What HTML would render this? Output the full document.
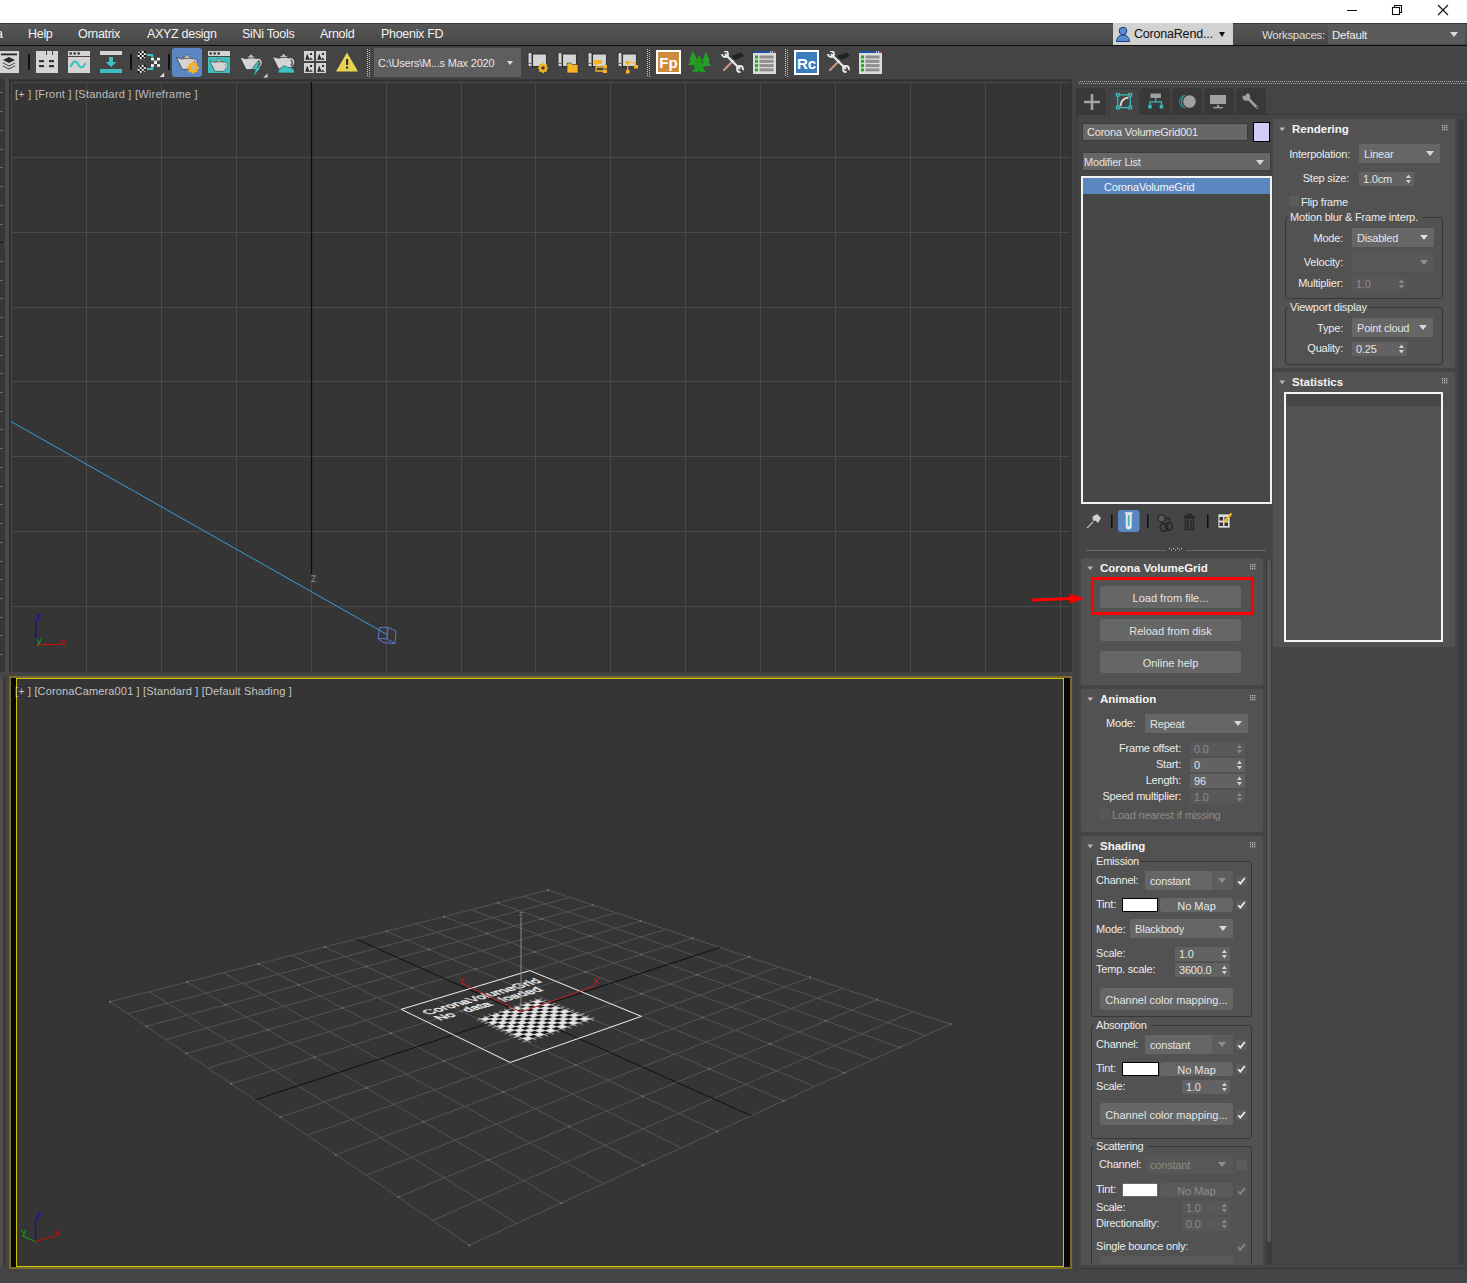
<!DOCTYPE html>
<html><head><meta charset="utf-8"><style>*{margin:0;padding:0;box-sizing:border-box}
html,body{width:1467px;height:1283px;overflow:hidden;background:#444;font-family:"Liberation Sans",sans-serif;font-size:12px;color:#e0e0e0}
.a{position:absolute}
.t{position:absolute;white-space:nowrap;font-size:12px;line-height:14px;color:#ececec;letter-spacing:-0.2px}
.tb{position:absolute;white-space:nowrap;font-size:12px;line-height:14px;color:#f4f4f4;font-weight:bold}
.dim{color:#8e8e8e}
.r{text-align:right}
.dd{position:absolute;background:#656565}
.dd.dis{background:#585858}
.sp{position:absolute;background:#626262}
.sp.dis{background:#585858}
.btn{position:absolute;background:#636363;border-radius:3px;text-align:center;color:#e6e6e6;font-size:12px;line-height:22px;white-space:nowrap;letter-spacing:0}
.ro{position:absolute;background:#515151;border-radius:3px}
.gb{position:absolute;border:1px solid #363636;border-radius:3px}
.gbl{position:absolute;background:#515151;padding:0 3px 0 2px;line-height:12px;font-size:12px;color:#ebebeb;white-space:nowrap}
.cb{position:absolute;background:#5e5e5e;width:11px;height:10px}
.arr{position:absolute;width:0;height:0;border-left:4px solid transparent;border-right:4px solid transparent;border-top:5px solid #d8d8d8}
</style></head><body><div class="a" style="left:0;top:0;width:1467px;height:23px;background:#fff"></div><svg class="a" style="left:1330px;top:0" width="137" height="23"><line x1="17" y1="10.5" x2="27" y2="10.5" stroke="#111" stroke-width="1"/><rect x="62.5" y="7.5" width="7" height="7" fill="none" stroke="#111" stroke-width="1.1"/><path d="M64.5 7.5V5.5H71.5V12.5H69.5" fill="none" stroke="#111" stroke-width="1.1"/><path d="M108 5L118 15M118 5L108 15" stroke="#111" stroke-width="1.1"/></svg><div class="a" style="left:0;top:23px;width:1467px;height:23px;background:linear-gradient(#575757,#464646);border-top:1px solid #3a3a3a;border-bottom:1px solid #0e0e0e"></div><span class="t" style="left:-4px;top:27px;font-size:12.5px;letter-spacing:-0.3px;color:#f2f2f2">a</span><span class="t" style="left:28px;top:27px;font-size:12.5px;letter-spacing:-0.3px;color:#f2f2f2">Help</span><span class="t" style="left:78px;top:27px;font-size:12.5px;letter-spacing:-0.3px;color:#f2f2f2">Ornatrix</span><span class="t" style="left:147px;top:27px;font-size:12.5px;letter-spacing:-0.3px;color:#f2f2f2">AXYZ design</span><span class="t" style="left:242px;top:27px;font-size:12.5px;letter-spacing:-0.3px;color:#f2f2f2">SiNi Tools</span><span class="t" style="left:320px;top:27px;font-size:12.5px;letter-spacing:-0.3px;color:#f2f2f2">Arnold</span><span class="t" style="left:381px;top:27px;font-size:12.5px;letter-spacing:-0.3px;color:#f2f2f2">Phoenix FD</span><div class="a" style="left:1113px;top:23px;width:120px;height:22px;background:#d2d2d2"></div><svg class="a" style="left:1115px;top:25px" width="20" height="18"><circle cx="8" cy="6" r="3.8" fill="#5a8ad6" stroke="#1d3a7a" stroke-width="1"/><path d="M1.5 16.5C2 11.5 5 10 8 10S14 11.5 14.5 16.5Z" fill="#5a8ad6" stroke="#1d3a7a" stroke-width="1"/></svg><span class="t" style="left:1134px;top:27px;font-size:12.5px;color:#111">CoronaRend...</span><div class="arr" style="left:1219px;top:32px;border-top-color:#111;border-left-width:3.5px;border-right-width:3.5px"></div><span class="t" style="left:1262px;top:28px;font-size:11.5px;color:#ddd;letter-spacing:-0.3px">Workspaces:</span><div class="a" style="left:1328px;top:24px;width:137px;height:20px;background:#5a5a5a"></div><span class="t" style="left:1332px;top:28px;font-size:11.5px;color:#eee">Default</span><div class="arr" style="left:1450px;top:32px;border-top-color:#ddd;border-left-width:4px;border-right-width:4px"></div><div class="a" style="left:0;top:46px;width:1467px;height:33px;background:#444"></div><svg class="a" style="left:0px;top:51px" width="19" height="22" viewBox="0 0 19 22"><rect width="19" height="22" fill="#d4d4d4"/><rect x="1" y="2.5" width="16" height="1.8" fill="#222"/><path d="M9 6L15 9L9 12L3 9Z M3 11.5L9 14.5L15 11.5L15.5 12L9 15.5L2.5 12Z M3 14.5L9 17.5L15 14.5L15.5 15L9 18.5L2.5 15Z" fill="#2a2a2a"/></svg><div class="a" style="left:28px;top:54px;width:1.5px;height:16px;background:#111"></div><div class="a" style="left:168px;top:54px;width:1.5px;height:16px;background:#111"></div><div class="a" style="left:130px;top:54px;width:1.5px;height:16px;background:#111"></div><svg class="a" style="left:36px;top:51px" width="23" height="23" viewBox="0 0 23 23"><path d="M0 0h10v4h12v18H0Z" fill="#d4d4d4"/><rect x="11" y="0" width="5" height="4" fill="#d4d4d4"/><rect x="17" y="0" width="5" height="4" fill="#d4d4d4"/><g fill="#333"><rect x="3" y="9" width="5" height="2.2"/><rect x="13" y="9" width="5" height="2.2"/><rect x="3" y="14" width="5" height="2.2"/><rect x="13" y="14" width="5" height="2.2"/></g></svg><svg class="a" style="left:68px;top:51px" width="23" height="23" viewBox="0 0 23 23"><rect x="0" y="0" width="22" height="5" fill="#d4d4d4"/><rect x="0" y="6" width="22" height="16" fill="#d4d4d4"/><g fill="#333"><rect x="1.5" y="1.3" width="2.3" height="2.3"/><rect x="5.5" y="1.3" width="2.3" height="2.3"/><rect x="9.5" y="1.3" width="2.3" height="2.3"/></g><path d="M3 15C5 10 8 9 10 13S14 18 17 13" fill="none" stroke="#3fbfbf" stroke-width="2.2" stroke-linecap="round"/></svg><svg class="a" style="left:100px;top:51px" width="23" height="23" viewBox="0 0 23 23"><rect x="0" y="0" width="22" height="4" fill="#d4d4d4"/><rect x="0" y="18" width="22" height="4" fill="#3fbfbf"/><path d="M9 6h4v5h3.5L11 16L5.5 11H9Z" fill="#3fbfbf"/></svg><svg class="a" style="left:137px;top:50px" width="28" height="28" viewBox="0 0 28 28"><circle cx="4.7" cy="5" r="4.2" fill="#f0f0f0"/><rect x="0.7" y="3.0" width="2" height="2" fill="#111"/><rect x="0.7" y="7.0" width="2" height="2" fill="#111"/><rect x="2.7" y="1.0" width="2" height="2" fill="#111"/><rect x="2.7" y="5.0" width="2" height="2" fill="#111"/><rect x="4.7" y="3.0" width="2" height="2" fill="#111"/><rect x="4.7" y="7.0" width="2" height="2" fill="#111"/><rect x="6.7" y="1.0" width="2" height="2" fill="#111"/><rect x="6.7" y="5.0" width="2" height="2" fill="#111"/><circle cx="4.7" cy="18.9" r="4.2" fill="#f0f0f0"/><rect x="0.7" y="16.9" width="2" height="2" fill="#111"/><rect x="0.7" y="20.9" width="2" height="2" fill="#111"/><rect x="2.7" y="14.9" width="2" height="2" fill="#111"/><rect x="2.7" y="18.9" width="2" height="2" fill="#111"/><rect x="4.7" y="16.9" width="2" height="2" fill="#111"/><rect x="4.7" y="20.9" width="2" height="2" fill="#111"/><rect x="6.7" y="14.9" width="2" height="2" fill="#111"/><rect x="6.7" y="18.9" width="2" height="2" fill="#111"/><path d="M10 5h5.2v2.4M10 19h5.2v-2.4" fill="none" stroke="#3fbfbf" stroke-width="2"/><g fill="#f0f0f0"><rect x="14" y="7.8" width="3" height="2.6"/><rect x="20" y="7.8" width="3" height="2.6"/><rect x="17" y="10.6" width="3" height="3.4"/><rect x="14" y="14.2" width="3" height="2.6"/><rect x="20" y="14.2" width="3" height="2.6"/></g><path d="M22.8 27h4.4v-4.4Z" fill="#e0e0e0"/></svg><div class="a" style="left:172px;top:48px;width:30px;height:29px;background:#5b87c3;border-radius:3px"></div><svg class="a" style="left:172px;top:48px" width="30" height="29" viewBox="0 0 30 29"><g transform="translate(4,6.5) scale(0.95)"><path d="M0.5 3.2L6.8 4.8C9 3.6 14.5 3.4 17.2 4.6C20 3.6 23 5.8 22.6 9.2C22.2 12 19.8 13.8 18.2 14.6L17.6 15.6H6.6Z" fill="#d4d4d4" stroke="#2e2e2e" stroke-width="0.7"/><path d="M10.2 0.4h2.8v1.8h2.2v1.6H8v-1.6h2.2Z" fill="#d4d4d4" stroke="#2e2e2e" stroke-width="0.5"/><path d="M18.6 6.6C20.6 7 21 10.6 18.8 12.3" fill="none" stroke="#5b87c3" stroke-width="1.3"/></g><polygon points="26.60,19.70 24.73,21.24 24.96,23.66 22.54,23.43 21.00,25.30 19.46,23.43 17.04,23.66 17.27,21.24 15.40,19.70 17.27,18.16 17.04,15.74 19.46,15.97 21.00,14.10 22.54,15.97 24.96,15.74 24.73,18.16" fill="#f5b324" stroke="#f5b324" stroke-width="1.2" stroke-linejoin="round"/><circle cx="21" cy="19.7" r="2.13" fill="#b8b8b8"/></svg><svg class="a" style="left:208px;top:51px" width="23" height="23" viewBox="0 0 23 23"><rect x="0" y="0" width="22" height="5" fill="#d4d4d4"/><rect x="0" y="6" width="22" height="16" fill="#3fbfbf"/><g fill="#333"><rect x="1.5" y="1.3" width="2.3" height="2.3"/><rect x="5.5" y="1.3" width="2.3" height="2.3"/><rect x="9.5" y="1.3" width="2.3" height="2.3"/></g><g transform="translate(1.5,7.5) scale(0.82)"><path d="M0.5 3.2L6.8 4.8C9 3.6 14.5 3.4 17.2 4.6C20 3.6 23 5.8 22.6 9.2C22.2 12 19.8 13.8 18.2 14.6L17.6 15.6H6.6Z" fill="#d4d4d4" stroke="#2e2e2e" stroke-width="0.7"/><path d="M10.2 0.4h2.8v1.8h2.2v1.6H8v-1.6h2.2Z" fill="#d4d4d4" stroke="#2e2e2e" stroke-width="0.5"/><path d="M18.6 6.6C20.6 7 21 10.6 18.8 12.3" fill="none" stroke="#3fbfbf" stroke-width="1.3"/></g></svg><svg class="a" style="left:239px;top:50px" width="29" height="28" viewBox="0 0 29 28"><g transform="translate(0.5,4) scale(1.0)"><path d="M0.5 3.2L6.8 4.8C9 3.6 14.5 3.4 17.2 4.6C20 3.6 23 5.8 22.6 9.2C22.2 12 19.8 13.8 18.2 14.6L17.6 15.6H6.6Z" fill="#d4d4d4" stroke="#2e2e2e" stroke-width="0.7"/><path d="M10.2 0.4h2.8v1.8h2.2v1.6H8v-1.6h2.2Z" fill="#d4d4d4" stroke="#2e2e2e" stroke-width="0.5"/><path d="M18.6 6.6C20.6 7 21 10.6 18.8 12.3" fill="none" stroke="#444" stroke-width="1.3"/></g><path d="M18.5 11.5L12.5 19.5h4l-2.5 7.5 8-9.5h-4l3-6Z" fill="#3fbfbf" stroke="#333" stroke-width="0.5"/><path d="M24.5 27.5h4v-4Z" fill="#e0e0e0"/></svg><svg class="a" style="left:271px;top:50px" width="25" height="26" viewBox="0 0 25 26"><g transform="translate(1,3.5) scale(1.0)"><path d="M0.5 3.2L6.8 4.8C9 3.6 14.5 3.4 17.2 4.6C20 3.6 23 5.8 22.6 9.2C22.2 12 19.8 13.8 18.2 14.6L17.6 15.6H6.6Z" fill="#d4d4d4" stroke="#2e2e2e" stroke-width="0.7"/><path d="M10.2 0.4h2.8v1.8h2.2v1.6H8v-1.6h2.2Z" fill="#d4d4d4" stroke="#2e2e2e" stroke-width="0.5"/><path d="M18.6 6.6C20.6 7 21 10.6 18.8 12.3" fill="none" stroke="#444" stroke-width="1.3"/></g><path d="M9 23C6.5 23 6.5 19 9.5 19C10.5 15.5 15 15 17 17.8C20.5 16.5 24 19 23.5 23Z" fill="#3fbfbf" stroke="#333" stroke-width="0.5"/></svg><svg class="a" style="left:304px;top:51px" width="23" height="23" viewBox="0 0 23 23"><rect x="0" y="0" width="10" height="10" fill="#d4d4d4"/><path d="M1.2 8.8L3.2 2.6L5.4 8.2L6.8 6.6L8.8 8.8Z" fill="#2c2c2c"/><rect x="6" y="2" width="2" height="2" fill="#2c2c2c"/><rect x="12" y="0" width="10" height="10" fill="#d4d4d4"/><path d="M13.2 8.8L15.2 2.6L17.4 8.2L18.8 6.6L20.8 8.8Z" fill="#2c2c2c"/><rect x="18" y="2" width="2" height="2" fill="#2c2c2c"/><rect x="0" y="12" width="10" height="10" fill="#d4d4d4"/><path d="M1.2 20.8L3.2 14.6L5.4 20.2L6.8 18.6L8.8 20.8Z" fill="#2c2c2c"/><rect x="6" y="14" width="2" height="2" fill="#2c2c2c"/><rect x="12" y="12" width="10" height="10" fill="#d4d4d4"/><path d="M13.2 20.8L15.2 14.6L17.4 20.2L18.8 18.6L20.8 20.8Z" fill="#2c2c2c"/><rect x="18" y="14" width="2" height="2" fill="#2c2c2c"/></svg><svg class="a" style="left:335px;top:51px" width="24" height="22" viewBox="0 0 24 22"><path d="M12 1.5L23 20.5H1Z" fill="#e9d34e"/><rect x="11" y="8" width="2.2" height="6" fill="#333"/><rect x="11" y="15.5" width="2.2" height="2.2" fill="#333"/></svg><svg class="a" style="left:367px;top:49px" width="4" height="28" viewBox="0 0 4 28"><g shape-rendering="crispEdges"><rect x="0" y="0" width="1" height="1" fill="#d0d0d0"/><rect x="0" y="2" width="1" height="1" fill="#d0d0d0"/><rect x="0" y="4" width="1" height="1" fill="#d0d0d0"/><rect x="0" y="6" width="1" height="1" fill="#d0d0d0"/><rect x="0" y="8" width="1" height="1" fill="#d0d0d0"/><rect x="0" y="10" width="1" height="1" fill="#d0d0d0"/><rect x="0" y="12" width="1" height="1" fill="#d0d0d0"/><rect x="0" y="14" width="1" height="1" fill="#d0d0d0"/><rect x="0" y="16" width="1" height="1" fill="#d0d0d0"/><rect x="0" y="18" width="1" height="1" fill="#d0d0d0"/><rect x="0" y="20" width="1" height="1" fill="#d0d0d0"/><rect x="0" y="22" width="1" height="1" fill="#d0d0d0"/><rect x="0" y="24" width="1" height="1" fill="#d0d0d0"/><rect x="0" y="26" width="1" height="1" fill="#d0d0d0"/><rect x="2" y="1" width="1" height="1" fill="#bdbdbd"/><rect x="2" y="3" width="1" height="1" fill="#bdbdbd"/><rect x="2" y="5" width="1" height="1" fill="#bdbdbd"/><rect x="2" y="7" width="1" height="1" fill="#bdbdbd"/><rect x="2" y="9" width="1" height="1" fill="#bdbdbd"/><rect x="2" y="11" width="1" height="1" fill="#bdbdbd"/><rect x="2" y="13" width="1" height="1" fill="#bdbdbd"/><rect x="2" y="15" width="1" height="1" fill="#bdbdbd"/><rect x="2" y="17" width="1" height="1" fill="#bdbdbd"/><rect x="2" y="19" width="1" height="1" fill="#bdbdbd"/><rect x="2" y="21" width="1" height="1" fill="#bdbdbd"/><rect x="2" y="23" width="1" height="1" fill="#bdbdbd"/><rect x="2" y="25" width="1" height="1" fill="#bdbdbd"/><rect x="2" y="27" width="1" height="1" fill="#bdbdbd"/></g></svg><svg class="a" style="left:647px;top:49px" width="4" height="28" viewBox="0 0 4 28"><g shape-rendering="crispEdges"><rect x="0" y="0" width="1" height="1" fill="#d0d0d0"/><rect x="0" y="2" width="1" height="1" fill="#d0d0d0"/><rect x="0" y="4" width="1" height="1" fill="#d0d0d0"/><rect x="0" y="6" width="1" height="1" fill="#d0d0d0"/><rect x="0" y="8" width="1" height="1" fill="#d0d0d0"/><rect x="0" y="10" width="1" height="1" fill="#d0d0d0"/><rect x="0" y="12" width="1" height="1" fill="#d0d0d0"/><rect x="0" y="14" width="1" height="1" fill="#d0d0d0"/><rect x="0" y="16" width="1" height="1" fill="#d0d0d0"/><rect x="0" y="18" width="1" height="1" fill="#d0d0d0"/><rect x="0" y="20" width="1" height="1" fill="#d0d0d0"/><rect x="0" y="22" width="1" height="1" fill="#d0d0d0"/><rect x="0" y="24" width="1" height="1" fill="#d0d0d0"/><rect x="0" y="26" width="1" height="1" fill="#d0d0d0"/><rect x="2" y="1" width="1" height="1" fill="#bdbdbd"/><rect x="2" y="3" width="1" height="1" fill="#bdbdbd"/><rect x="2" y="5" width="1" height="1" fill="#bdbdbd"/><rect x="2" y="7" width="1" height="1" fill="#bdbdbd"/><rect x="2" y="9" width="1" height="1" fill="#bdbdbd"/><rect x="2" y="11" width="1" height="1" fill="#bdbdbd"/><rect x="2" y="13" width="1" height="1" fill="#bdbdbd"/><rect x="2" y="15" width="1" height="1" fill="#bdbdbd"/><rect x="2" y="17" width="1" height="1" fill="#bdbdbd"/><rect x="2" y="19" width="1" height="1" fill="#bdbdbd"/><rect x="2" y="21" width="1" height="1" fill="#bdbdbd"/><rect x="2" y="23" width="1" height="1" fill="#bdbdbd"/><rect x="2" y="25" width="1" height="1" fill="#bdbdbd"/><rect x="2" y="27" width="1" height="1" fill="#bdbdbd"/></g></svg><svg class="a" style="left:785px;top:49px" width="4" height="28" viewBox="0 0 4 28"><g shape-rendering="crispEdges"><rect x="0" y="0" width="1" height="1" fill="#d0d0d0"/><rect x="0" y="2" width="1" height="1" fill="#d0d0d0"/><rect x="0" y="4" width="1" height="1" fill="#d0d0d0"/><rect x="0" y="6" width="1" height="1" fill="#d0d0d0"/><rect x="0" y="8" width="1" height="1" fill="#d0d0d0"/><rect x="0" y="10" width="1" height="1" fill="#d0d0d0"/><rect x="0" y="12" width="1" height="1" fill="#d0d0d0"/><rect x="0" y="14" width="1" height="1" fill="#d0d0d0"/><rect x="0" y="16" width="1" height="1" fill="#d0d0d0"/><rect x="0" y="18" width="1" height="1" fill="#d0d0d0"/><rect x="0" y="20" width="1" height="1" fill="#d0d0d0"/><rect x="0" y="22" width="1" height="1" fill="#d0d0d0"/><rect x="0" y="24" width="1" height="1" fill="#d0d0d0"/><rect x="0" y="26" width="1" height="1" fill="#d0d0d0"/><rect x="2" y="1" width="1" height="1" fill="#bdbdbd"/><rect x="2" y="3" width="1" height="1" fill="#bdbdbd"/><rect x="2" y="5" width="1" height="1" fill="#bdbdbd"/><rect x="2" y="7" width="1" height="1" fill="#bdbdbd"/><rect x="2" y="9" width="1" height="1" fill="#bdbdbd"/><rect x="2" y="11" width="1" height="1" fill="#bdbdbd"/><rect x="2" y="13" width="1" height="1" fill="#bdbdbd"/><rect x="2" y="15" width="1" height="1" fill="#bdbdbd"/><rect x="2" y="17" width="1" height="1" fill="#bdbdbd"/><rect x="2" y="19" width="1" height="1" fill="#bdbdbd"/><rect x="2" y="21" width="1" height="1" fill="#bdbdbd"/><rect x="2" y="23" width="1" height="1" fill="#bdbdbd"/><rect x="2" y="25" width="1" height="1" fill="#bdbdbd"/><rect x="2" y="27" width="1" height="1" fill="#bdbdbd"/></g></svg><div class="a" style="left:374px;top:48px;width:147px;height:29px;background:#5e5e5e"></div><span class="t" style="left:378px;top:56px;font-size:11px;color:#e6e6e6">C:\Users\M...s Max 2020</span><div class="arr" style="left:507px;top:61px;border-left-width:3.5px;border-right-width:3.5px;border-top-width:4px;border-top-color:#ddd"></div><svg class="a" style="left:527px;top:51px" width="23" height="24" viewBox="0 0 23 24"><g transform="translate(0,0)"><rect x="5.6" y="3" width="13.8" height="12.6" fill="#d4d4d4" stroke="#2a2a2a" stroke-width="0.9"/><path d="M1 3.2A2 2 0 0 1 5 3.2V14H1Z" fill="#d4d4d4" stroke="#2a2a2a" stroke-width="0.9"/><path d="M1 13.6C1 11.8 5 11.8 5 13.6V15.6H12V15.6H3C1.8 15.6 1 14.8 1 13.6Z" fill="#d4d4d4" stroke="#2a2a2a" stroke-width="0.7"/><polygon points="20.60,16.90 19.06,18.17 19.25,20.15 17.27,19.96 16.00,21.50 14.73,19.96 12.75,20.15 12.94,18.17 11.40,16.90 12.94,15.63 12.75,13.65 14.73,13.84 16.00,12.30 17.27,13.84 19.25,13.65 19.06,15.63" fill="#f5b324" stroke="#f5b324" stroke-width="1.2" stroke-linejoin="round"/><circle cx="16" cy="16.9" r="1.75" fill="#3a3a3a"/></g></svg><svg class="a" style="left:557px;top:51px" width="23" height="24" viewBox="0 0 23 24"><g transform="translate(0,0)"><rect x="5.6" y="3" width="13.8" height="12.6" fill="#d4d4d4" stroke="#2a2a2a" stroke-width="0.9"/><path d="M1 3.2A2 2 0 0 1 5 3.2V14H1Z" fill="#d4d4d4" stroke="#2a2a2a" stroke-width="0.9"/><path d="M1 13.6C1 11.8 5 11.8 5 13.6V15.6H12V15.6H3C1.8 15.6 1 14.8 1 13.6Z" fill="#d4d4d4" stroke="#2a2a2a" stroke-width="0.7"/><path d="M10 12h4l1 1.5h6V22H10Z" fill="#f5b324" stroke="#333" stroke-width="0.6"/></g></svg><svg class="a" style="left:587px;top:51px" width="23" height="24" viewBox="0 0 23 24"><g transform="translate(0,0)"><rect x="5.6" y="3" width="13.8" height="12.6" fill="#d4d4d4" stroke="#2a2a2a" stroke-width="0.9"/><path d="M1 3.2A2 2 0 0 1 5 3.2V14H1Z" fill="#d4d4d4" stroke="#2a2a2a" stroke-width="0.9"/><path d="M1 13.6C1 11.8 5 11.8 5 13.6V15.6H12V15.6H3C1.8 15.6 1 14.8 1 13.6Z" fill="#d4d4d4" stroke="#2a2a2a" stroke-width="0.7"/><rect x="7" y="9" width="8" height="4" fill="#f5b324"/><path d="M9 13v7h7M9 16h7" fill="none" stroke="#f5b324" stroke-width="1.3"/><rect x="16" y="14" width="4" height="3.5" fill="#f5b324"/><rect x="16" y="18.5" width="4" height="3.5" fill="#f5b324"/></g></svg><svg class="a" style="left:617px;top:51px" width="23" height="24" viewBox="0 0 23 24"><g transform="translate(0,0)"><rect x="5.6" y="3" width="13.8" height="12.6" fill="#d4d4d4" stroke="#2a2a2a" stroke-width="0.9"/><path d="M1 3.2A2 2 0 0 1 5 3.2V14H1Z" fill="#d4d4d4" stroke="#2a2a2a" stroke-width="0.9"/><path d="M1 13.6C1 11.8 5 11.8 5 13.6V15.6H12V15.6H3C1.8 15.6 1 14.8 1 13.6Z" fill="#d4d4d4" stroke="#2a2a2a" stroke-width="0.7"/><rect x="9" y="10" width="3.5" height="3.5" fill="#f5b324"/><rect x="17" y="14" width="4" height="3.5" fill="#f5b324"/><rect x="9" y="19" width="3.5" height="3.5" fill="#f5b324"/><path d="M10.7 13.5V19M12.5 11.5h6v2.5" fill="none" stroke="#f5b324" stroke-width="1.2"/></g></svg><svg class="a" style="left:656px;top:50px" width="25" height="24" viewBox="0 0 25 24"><rect x="1" y="1" width="23" height="22" fill="#d08a3c" stroke="#fff" stroke-width="2"/><text x="12.5" y="18" text-anchor="middle" font-family="Liberation Sans" font-weight="bold" font-size="15" fill="#fff">Fp</text></svg><svg class="a" style="left:688px;top:51px" width="23" height="23" viewBox="0 0 23 23"><g fill="#27a027"><path d="M5 0L9 9H7L10 14H0L3 9H1Z"/><path d="M18 1L22 10H20L23 15H13L16 10H14Z"/><path d="M11 4L15 11H13L17 16H14.5L18 21H4L7.5 16H5L9 11H7Z" fill="#1f9a1f"/></g><rect x="10" y="20" width="2" height="2.5" fill="#1a6a1a"/></svg><svg class="a" style="left:721px;top:51px" width="24" height="22" viewBox="0 0 24 22"><path d="M3 19L12 10" stroke="#c89080" stroke-width="2.4" stroke-linecap="round"/><path d="M10 5L20 1.5L23 5L19 7L14 9Z" fill="#222"/><path d="M4 3L19 18" stroke="#e8e8e8" stroke-width="2.2"/><circle cx="4" cy="3" r="3" fill="none" stroke="#e8e8e8" stroke-width="1.8"/><circle cx="19" cy="18" r="3" fill="none" stroke="#e8e8e8" stroke-width="1.8"/><rect x="0" y="0" width="3" height="3" fill="#444"/><rect x="19.5" y="19" width="3" height="3" fill="#444"/></svg><svg class="a" style="left:753px;top:51px" width="23" height="23" viewBox="0 0 23 23"><rect x="0" y="0" width="23" height="23" fill="#dcdcdc"/><rect x="0" y="0" width="23" height="2" fill="#1e4fa6"/><rect x="17" y="0.4" width="1.2" height="1.2" fill="#fff"/><rect x="19" y="0.4" width="1.2" height="1.2" fill="#fff"/><rect x="21" y="0.4" width="1.2" height="1.2" fill="#e33"/><rect x="2" y="4.5" width="3" height="3" fill="#1fb01f"/><rect x="6.5" y="4.5" width="14" height="3" fill="#8e8e8e"/><rect x="2" y="8.8" width="3" height="3" fill="#1fb01f"/><rect x="6.5" y="8.8" width="14" height="3" fill="#8e8e8e"/><rect x="2" y="13.1" width="3" height="3" fill="#1fb01f"/><rect x="6.5" y="13.1" width="14" height="3" fill="#8e8e8e"/><rect x="2" y="17.4" width="3" height="3" fill="#1fb01f"/><rect x="6.5" y="17.4" width="14" height="3" fill="#8e8e8e"/></svg><svg class="a" style="left:794px;top:50px" width="25" height="25" viewBox="0 0 25 25"><rect x="1" y="1" width="23" height="23" fill="#3b7ec0" stroke="#fff" stroke-width="2"/><text x="12.5" y="19" text-anchor="middle" font-family="Liberation Sans" font-weight="bold" font-size="15" fill="#fff">Rc</text></svg><svg class="a" style="left:827px;top:51px" width="24" height="22" viewBox="0 0 24 22"><path d="M3 19L12 10" stroke="#c89080" stroke-width="2.4" stroke-linecap="round"/><path d="M10 5L20 1.5L23 5L19 7L14 9Z" fill="#222"/><path d="M4 3L19 18" stroke="#e8e8e8" stroke-width="2.2"/><circle cx="4" cy="3" r="3" fill="none" stroke="#e8e8e8" stroke-width="1.8"/><circle cx="19" cy="18" r="3" fill="none" stroke="#e8e8e8" stroke-width="1.8"/><rect x="0" y="0" width="3" height="3" fill="#444"/><rect x="19.5" y="19" width="3" height="3" fill="#444"/></svg><svg class="a" style="left:859px;top:51px" width="23" height="23" viewBox="0 0 23 23"><rect x="0" y="0" width="23" height="23" fill="#dcdcdc"/><rect x="0" y="0" width="23" height="2" fill="#1e4fa6"/><rect x="17" y="0.4" width="1.2" height="1.2" fill="#fff"/><rect x="19" y="0.4" width="1.2" height="1.2" fill="#fff"/><rect x="21" y="0.4" width="1.2" height="1.2" fill="#e33"/><rect x="2" y="4.5" width="3" height="3" fill="#1fb01f"/><rect x="6.5" y="4.5" width="14" height="3" fill="#8e8e8e"/><rect x="2" y="8.8" width="3" height="3" fill="#1fb01f"/><rect x="6.5" y="8.8" width="14" height="3" fill="#8e8e8e"/><rect x="2" y="13.1" width="3" height="3" fill="#1fb01f"/><rect x="6.5" y="13.1" width="14" height="3" fill="#8e8e8e"/><rect x="2" y="17.4" width="3" height="3" fill="#1fb01f"/><rect x="6.5" y="17.4" width="14" height="3" fill="#8e8e8e"/></svg><div class="a" style="left:0;top:79px;width:5px;height:593px;background:#383838"></div><div class="a" style="left:5px;top:79px;width:4px;height:593px;background:#4a4a4a"></div><div class="a" style="left:0;top:92px;width:3px;height:1px;background:#6a6a6a"></div><div class="a" style="left:0;top:111px;width:3px;height:1px;background:#6a6a6a"></div><div class="a" style="left:0;top:130px;width:3px;height:1px;background:#6a6a6a"></div><div class="a" style="left:0;top:149px;width:3px;height:1px;background:#6a6a6a"></div><div class="a" style="left:0;top:167px;width:3px;height:1px;background:#6a6a6a"></div><div class="a" style="left:0;top:186px;width:3px;height:1px;background:#6a6a6a"></div><div class="a" style="left:0;top:205px;width:3px;height:1px;background:#6a6a6a"></div><div class="a" style="left:0;top:224px;width:3px;height:1px;background:#6a6a6a"></div><div class="a" style="left:0;top:242px;width:3px;height:1px;background:#111"></div><div class="a" style="left:0;top:261px;width:3px;height:1px;background:#6a6a6a"></div><div class="a" style="left:0;top:280px;width:3px;height:1px;background:#6a6a6a"></div><div class="a" style="left:0;top:298px;width:3px;height:1px;background:#6a6a6a"></div><div class="a" style="left:0;top:317px;width:3px;height:1px;background:#6a6a6a"></div><div class="a" style="left:0;top:336px;width:3px;height:1px;background:#6a6a6a"></div><div class="a" style="left:0;top:355px;width:3px;height:1px;background:#6a6a6a"></div><div class="a" style="left:0;top:373px;width:3px;height:1px;background:#6a6a6a"></div><div class="a" style="left:0;top:392px;width:3px;height:1px;background:#6a6a6a"></div><div class="a" style="left:0;top:411px;width:3px;height:1px;background:#6a6a6a"></div><div class="a" style="left:0;top:429px;width:3px;height:1px;background:#6a6a6a"></div><div class="a" style="left:0;top:448px;width:3px;height:1px;background:#6a6a6a"></div><div class="a" style="left:0;top:467px;width:3px;height:1px;background:#6a6a6a"></div><div class="a" style="left:0;top:486px;width:3px;height:1px;background:#6a6a6a"></div><div class="a" style="left:0;top:504px;width:3px;height:1px;background:#6a6a6a"></div><div class="a" style="left:0;top:523px;width:3px;height:1px;background:#6a6a6a"></div><div class="a" style="left:0;top:542px;width:3px;height:1px;background:#6a6a6a"></div><div class="a" style="left:0;top:561px;width:3px;height:1px;background:#6a6a6a"></div><div class="a" style="left:0;top:579px;width:3px;height:1px;background:#6a6a6a"></div><div class="a" style="left:0;top:598px;width:3px;height:1px;background:#6a6a6a"></div><div class="a" style="left:0;top:617px;width:3px;height:1px;background:#6a6a6a"></div><div class="a" style="left:0;top:635px;width:3px;height:1px;background:#6a6a6a"></div><div class="a" style="left:0;top:654px;width:3px;height:1px;background:#6a6a6a"></div><div class="a" style="left:0;top:672px;width:9px;height:5px;background:#474747"></div><div class="a" style="left:0;top:677px;width:3px;height:590px;background:#4e4e4e"></div><div class="a" style="left:3px;top:677px;width:3px;height:590px;background:#393939"></div><div class="a" style="left:6px;top:677px;width:3px;height:592px;background:#444"></div><svg class="a" style="left:9px;top:79px" width="1063" height="593"><rect width="1063" height="593" fill="#353535"/><rect x="0" y="0" width="2" height="593" fill="#2f2f2f"/><g stroke="#4a4a4a" stroke-width="1"><line x1="2.5" y1="3" x2="2.5" y2="593" /><line x1="77.5" y1="3" x2="77.5" y2="593" /><line x1="152.5" y1="3" x2="152.5" y2="593" /><line x1="227.5" y1="3" x2="227.5" y2="593" /><line x1="302.5" y1="3" x2="302.5" y2="593" /><line x1="377.5" y1="3" x2="377.5" y2="593" /><line x1="452.5" y1="3" x2="452.5" y2="593" /><line x1="526.5" y1="3" x2="526.5" y2="593" /><line x1="601.5" y1="3" x2="601.5" y2="593" /><line x1="676.5" y1="3" x2="676.5" y2="593" /><line x1="751.5" y1="3" x2="751.5" y2="593" /><line x1="826.5" y1="3" x2="826.5" y2="593" /><line x1="901.5" y1="3" x2="901.5" y2="593" /><line x1="976.5" y1="3" x2="976.5" y2="593" /><line x1="1051.5" y1="3" x2="1051.5" y2="593" /><line x1="2" y1="3.5" x2="1061" y2="3.5" /><line x1="2" y1="78.5" x2="1061" y2="78.5" /><line x1="2" y1="153.5" x2="1061" y2="153.5" /><line x1="2" y1="228.5" x2="1061" y2="228.5" /><line x1="2" y1="302.5" x2="1061" y2="302.5" /><line x1="2" y1="377.5" x2="1061" y2="377.5" /><line x1="2" y1="452.5" x2="1061" y2="452.5" /><line x1="2" y1="527.5" x2="1061" y2="527.5" /></g><line x1="302.5" y1="3" x2="302.5" y2="495.5" stroke="#0c0c0c" stroke-width="1.2"/><rect x="300" y="495.5" width="7" height="8" fill="#353535"/><path d="M302.5 496.79999999999995h4.2l-4.2 5.6h4.2" fill="none" stroke="#8c8c8c" stroke-width="1"/><line x1="2" y1="342.5" x2="378" y2="555.5" stroke="#3c9bd6" stroke-width="1"/><g transform="translate(378,557)" fill="none" stroke="#5a7fe0" stroke-width="0.9"><path d="M-7.5 -8.5L1 -8.5L0 3L-9 2.5Z"/><path d="M1 -8.5L9 -5L8 7.5L0 3"/><path d="M-9 2.5L-4 6.5L8 7.5"/></g><g transform="translate(-9,-79)"><line x1="35.7" y1="620" x2="35.7" y2="645" stroke="#1010c0" stroke-width="1.3"/><line x1="36" y1="644.5" x2="62" y2="644.5" stroke="#c01010" stroke-width="1.3"/><path d="M36.5 614.5h3.5l-3.5 5h3.5" fill="none" stroke="#1010c0" stroke-width="1.2"/><path d="M61.5 639.5l4 5.5M65.5 639.5l-4 5.5" stroke="#c01010" stroke-width="1.1"/><path d="M36.5 639l2 4M41 639l-3 7" stroke="#119911" stroke-width="1.1" fill="none"/></g></svg><span class="t" style="left:15px;top:87px;font-size:11px;color:#bdbdbd;letter-spacing:0.25px">[+ ] [Front ] [Standard ] [Wireframe ]</span><svg class="a" style="left:9px;top:676px" width="1063" height="593"><rect width="1063" height="593" fill="#7b6a2e"/><rect x="2" y="2" width="1059" height="589" fill="#080808"/><rect x="7" y="2" width="1048" height="589" fill="#c9c400"/><rect x="8" y="3" width="1046" height="587" fill="#353535"/><g stroke="#535353" stroke-width="1"><line x1="101.0" y1="325.7" x2="460.4" y2="569.2"/><line x1="101.0" y1="325.7" x2="539.2" y2="214.1"/><line x1="140.3" y1="315.7" x2="507.7" y2="547.5"/><line x1="118.8" y1="337.7" x2="561.1" y2="221.4"/><line x1="178.1" y1="306.1" x2="552.3" y2="527.0"/><line x1="137.4" y1="350.4" x2="583.7" y2="228.9"/><line x1="214.5" y1="296.8" x2="594.4" y2="507.6"/><line x1="156.9" y1="363.6" x2="607.3" y2="236.8"/><line x1="249.5" y1="287.9" x2="634.3" y2="489.3"/><line x1="177.5" y1="377.5" x2="631.7" y2="245.0"/><line x1="283.2" y1="279.3" x2="672.2" y2="471.9"/><line x1="199.1" y1="392.2" x2="657.1" y2="253.4"/><line x1="315.8" y1="271.0" x2="708.1" y2="455.4"/><line x1="221.9" y1="407.6" x2="683.6" y2="262.3"/><line x1="377.4" y1="255.3" x2="774.8" y2="424.7"/><line x1="271.3" y1="441.1" x2="739.9" y2="281.0"/><line x1="406.7" y1="247.8" x2="805.8" y2="410.5"/><line x1="298.2" y1="459.3" x2="769.8" y2="291.0"/><line x1="435.0" y1="240.6" x2="835.4" y2="396.9"/><line x1="326.8" y1="478.7" x2="801.1" y2="301.4"/><line x1="462.3" y1="233.7" x2="863.7" y2="383.9"/><line x1="357.1" y1="499.2" x2="833.8" y2="312.3"/><line x1="488.8" y1="226.9" x2="890.7" y2="371.5"/><line x1="389.3" y1="521.0" x2="868.0" y2="323.7"/><line x1="514.4" y1="220.4" x2="916.5" y2="359.6"/><line x1="423.7" y1="544.3" x2="903.8" y2="335.7"/><line x1="539.2" y1="214.1" x2="941.3" y2="348.2"/><line x1="460.4" y1="569.2" x2="941.3" y2="348.2"/></g><g stroke="#101010" stroke-width="1"><line x1="347.1" y1="263.0" x2="742.3" y2="439.7"/><line x1="245.9" y1="423.9" x2="711.1" y2="271.4"/></g><g fill="#6a6a6a"><rect x="100.0" y="324.7" width="2" height="2"/><rect x="136.4" y="349.4" width="2" height="2"/><rect x="176.5" y="376.5" width="2" height="2"/><rect x="220.9" y="406.6" width="2" height="2"/><rect x="270.3" y="440.1" width="2" height="2"/><rect x="325.8" y="477.7" width="2" height="2"/><rect x="388.3" y="520.0" width="2" height="2"/><rect x="459.4" y="568.2" width="2" height="2"/><rect x="177.1" y="305.1" width="2" height="2"/><rect x="215.6" y="327.8" width="2" height="2"/><rect x="257.9" y="352.8" width="2" height="2"/><rect x="304.5" y="380.3" width="2" height="2"/><rect x="356.2" y="410.8" width="2" height="2"/><rect x="413.7" y="444.8" width="2" height="2"/><rect x="478.3" y="482.9" width="2" height="2"/><rect x="551.3" y="526.0" width="2" height="2"/><rect x="248.5" y="286.9" width="2" height="2"/><rect x="288.7" y="307.9" width="2" height="2"/><rect x="332.7" y="330.9" width="2" height="2"/><rect x="381.0" y="356.2" width="2" height="2"/><rect x="434.3" y="384.1" width="2" height="2"/><rect x="493.4" y="415.0" width="2" height="2"/><rect x="559.3" y="449.5" width="2" height="2"/><rect x="633.3" y="488.3" width="2" height="2"/><rect x="314.8" y="270.0" width="2" height="2"/><rect x="356.3" y="289.5" width="2" height="2"/><rect x="401.6" y="310.8" width="2" height="2"/><rect x="451.2" y="334.1" width="2" height="2"/><rect x="505.7" y="359.7" width="2" height="2"/><rect x="565.8" y="388.0" width="2" height="2"/><rect x="632.6" y="419.3" width="2" height="2"/><rect x="707.1" y="454.4" width="2" height="2"/><rect x="376.4" y="254.3" width="2" height="2"/><rect x="419.0" y="272.5" width="2" height="2"/><rect x="465.4" y="292.2" width="2" height="2"/><rect x="515.9" y="313.7" width="2" height="2"/><rect x="571.2" y="337.3" width="2" height="2"/><rect x="632.0" y="363.2" width="2" height="2"/><rect x="699.2" y="391.9" width="2" height="2"/><rect x="773.8" y="423.7" width="2" height="2"/><rect x="434.0" y="239.6" width="2" height="2"/><rect x="477.4" y="256.6" width="2" height="2"/><rect x="524.5" y="275.0" width="2" height="2"/><rect x="575.6" y="294.9" width="2" height="2"/><rect x="631.5" y="316.7" width="2" height="2"/><rect x="692.7" y="340.6" width="2" height="2"/><rect x="760.0" y="366.8" width="2" height="2"/><rect x="834.4" y="395.9" width="2" height="2"/><rect x="487.8" y="225.9" width="2" height="2"/><rect x="531.8" y="241.8" width="2" height="2"/><rect x="579.5" y="258.9" width="2" height="2"/><rect x="631.1" y="277.5" width="2" height="2"/><rect x="687.2" y="297.7" width="2" height="2"/><rect x="748.5" y="319.7" width="2" height="2"/><rect x="815.7" y="343.9" width="2" height="2"/><rect x="889.7" y="370.5" width="2" height="2"/><rect x="538.2" y="213.1" width="2" height="2"/><rect x="582.7" y="227.9" width="2" height="2"/><rect x="630.7" y="244.0" width="2" height="2"/><rect x="682.6" y="261.3" width="2" height="2"/><rect x="738.9" y="280.0" width="2" height="2"/><rect x="800.1" y="300.4" width="2" height="2"/><rect x="867.0" y="322.7" width="2" height="2"/><rect x="940.3" y="347.2" width="2" height="2"/></g><polygon points="392.2,333.3 520.7,294.6 632.4,340.4 501.2,386.4" fill="none" stroke="#e8e8e8" stroke-width="1"/><g fill="#161616"><polygon points="475.78,344.77 481.06,343.00 484.96,344.78 479.63,346.57"/><polygon points="483.56,348.40 488.94,346.60 492.99,348.45 487.56,350.27"/><polygon points="491.65,352.18 497.13,350.34 501.35,352.26 495.82,354.13"/><polygon points="500.07,356.12 505.65,354.23 510.05,356.24 504.41,358.15"/><polygon points="508.85,360.22 514.54,358.29 519.12,360.38 513.38,362.34"/><polygon points="477.24,341.25 482.47,339.51 486.34,341.24 481.06,343.00"/><polygon points="484.96,344.78 490.28,343.00 494.31,344.80 488.94,346.60"/><polygon points="492.99,348.45 498.41,346.63 502.59,348.50 497.13,350.34"/><polygon points="501.35,352.26 506.86,350.40 511.22,352.35 505.65,354.23"/><polygon points="510.05,356.24 515.67,354.33 520.21,356.36 514.54,358.29"/><polygon points="519.12,360.38 524.85,358.43 529.58,360.55 523.80,362.52"/><polygon points="486.34,341.24 491.60,339.48 495.59,341.22 490.28,343.00"/><polygon points="494.31,344.80 499.66,343.00 503.81,344.81 498.41,346.63"/><polygon points="502.59,348.50 508.05,346.66 512.37,348.55 506.86,350.40"/><polygon points="511.22,352.35 516.78,350.47 521.28,352.43 515.67,354.33"/><polygon points="520.21,356.36 525.87,354.44 530.56,356.49 524.85,358.43"/><polygon points="487.68,337.77 492.89,336.04 496.85,337.73 491.60,339.48"/><polygon points="495.59,341.22 500.89,339.45 505.01,341.21 499.66,343.00"/><polygon points="503.81,344.81 509.21,343.00 513.49,344.83 508.05,346.66"/><polygon points="512.37,348.55 517.86,346.69 522.32,348.60 516.78,350.47"/><polygon points="521.28,352.43 526.87,350.54 531.52,352.52 525.87,354.44"/><polygon points="530.56,356.49 536.26,354.55 541.11,356.61 535.35,358.58"/><polygon points="496.85,337.73 502.09,335.98 506.17,337.68 500.89,339.45"/><polygon points="505.01,341.21 510.34,339.42 514.59,341.19 509.21,343.00"/><polygon points="513.49,344.83 518.92,343.00 523.34,344.84 517.86,346.69"/><polygon points="522.32,348.60 527.85,346.73 532.45,348.65 526.87,350.54"/><polygon points="531.52,352.52 537.15,350.61 541.95,352.61 536.26,354.55"/><polygon points="498.08,334.31 503.26,332.58 507.32,334.23 502.09,335.98"/><polygon points="506.17,337.68 511.45,335.92 515.66,337.64 510.34,339.42"/><polygon points="514.59,341.19 519.95,339.39 524.33,341.18 518.92,343.00"/><polygon points="523.34,344.84 528.80,343.00 533.36,344.86 527.85,346.73"/><polygon points="532.45,348.65 538.02,346.76 542.77,348.70 537.15,350.61"/><polygon points="541.95,352.61 547.62,350.68 552.58,352.70 546.85,354.65"/><polygon points="507.32,334.23 512.53,332.49 516.71,334.16 511.45,335.92"/><polygon points="515.66,337.64 520.97,335.86 525.31,337.59 519.95,339.39"/><polygon points="524.33,341.18 529.74,339.36 534.26,341.16 528.80,343.00"/><polygon points="533.36,344.86 538.87,343.00 543.57,344.88 538.02,346.76"/><polygon points="542.77,348.70 548.38,346.79 553.28,348.75 547.62,350.68"/><polygon points="508.43,330.86 513.59,329.14 517.73,330.75 512.53,332.49"/><polygon points="516.71,334.16 521.96,332.40 526.26,334.08 520.97,335.86"/><polygon points="525.31,337.59 530.65,335.79 535.13,337.54 529.74,339.36"/><polygon points="534.26,341.16 539.70,339.32 544.36,341.14 538.87,343.00"/><polygon points="543.57,344.88 549.11,343.00 553.97,344.89 548.38,346.79"/><polygon points="553.28,348.75 558.93,346.83 563.99,348.81 558.29,350.75"/><polygon points="517.73,330.75 522.93,329.02 527.19,330.65 521.96,332.40"/><polygon points="526.26,334.08 531.55,332.31 535.98,334.00 530.65,335.79"/><polygon points="535.13,337.54 540.51,335.73 545.12,337.49 539.70,339.32"/><polygon points="544.36,341.14 549.83,339.29 554.64,341.13 549.11,343.00"/><polygon points="553.97,344.89 559.55,343.00 564.56,344.91 558.93,346.83"/><polygon points="518.74,327.42 523.88,325.71 528.11,327.29 522.93,329.02"/><polygon points="527.19,330.65 532.42,328.90 536.82,330.54 531.55,332.31"/><polygon points="535.98,334.00 541.30,332.22 545.87,333.92 540.51,335.73"/><polygon points="545.12,337.49 550.54,335.67 555.30,337.44 549.83,339.29"/><polygon points="554.64,341.13 560.16,339.26 565.11,341.11 559.55,343.00"/><polygon points="564.56,344.91 570.17,343.00 575.34,344.93 569.67,346.87"/><polygon points="528.11,327.29 533.28,325.56 537.63,327.15 532.42,328.90"/><polygon points="536.82,330.54 542.08,328.78 546.61,330.43 541.30,332.22"/><polygon points="545.87,333.92 551.23,332.12 555.94,333.84 550.54,335.67"/><polygon points="555.30,337.44 560.75,335.60 565.66,337.39 560.16,339.26"/><polygon points="565.11,341.11 570.67,339.22 575.78,341.09 570.17,343.00"/></g><g fill="#e6e6e6"><polygon points="472.00,343.00 477.24,341.25 481.06,343.00 475.78,344.77"/><polygon points="479.63,346.57 484.96,344.78 488.94,346.60 483.56,348.40"/><polygon points="487.56,350.27 492.99,348.45 497.13,350.34 491.65,352.18"/><polygon points="495.82,354.13 501.35,352.26 505.65,354.23 500.07,356.12"/><polygon points="504.41,358.15 510.05,356.24 514.54,358.29 508.85,360.22"/><polygon points="513.38,362.34 519.12,360.38 523.80,362.52 518.00,364.50"/><polygon points="481.06,343.00 486.34,341.24 490.28,343.00 484.96,344.78"/><polygon points="488.94,346.60 494.31,344.80 498.41,346.63 492.99,348.45"/><polygon points="497.13,350.34 502.59,348.50 506.86,350.40 501.35,352.26"/><polygon points="505.65,354.23 511.22,352.35 515.67,354.33 510.05,356.24"/><polygon points="514.54,358.29 520.21,356.36 524.85,358.43 519.12,360.38"/><polygon points="482.47,339.51 487.68,337.77 491.60,339.48 486.34,341.24"/><polygon points="490.28,343.00 495.59,341.22 499.66,343.00 494.31,344.80"/><polygon points="498.41,346.63 503.81,344.81 508.05,346.66 502.59,348.50"/><polygon points="506.86,350.40 512.37,348.55 516.78,350.47 511.22,352.35"/><polygon points="515.67,354.33 521.28,352.43 525.87,354.44 520.21,356.36"/><polygon points="524.85,358.43 530.56,356.49 535.35,358.58 529.58,360.55"/><polygon points="491.60,339.48 496.85,337.73 500.89,339.45 495.59,341.22"/><polygon points="499.66,343.00 505.01,341.21 509.21,343.00 503.81,344.81"/><polygon points="508.05,346.66 513.49,344.83 517.86,346.69 512.37,348.55"/><polygon points="516.78,350.47 522.32,348.60 526.87,350.54 521.28,352.43"/><polygon points="525.87,354.44 531.52,352.52 536.26,354.55 530.56,356.49"/><polygon points="492.89,336.04 498.08,334.31 502.09,335.98 496.85,337.73"/><polygon points="500.89,339.45 506.17,337.68 510.34,339.42 505.01,341.21"/><polygon points="509.21,343.00 514.59,341.19 518.92,343.00 513.49,344.83"/><polygon points="517.86,346.69 523.34,344.84 527.85,346.73 522.32,348.60"/><polygon points="526.87,350.54 532.45,348.65 537.15,350.61 531.52,352.52"/><polygon points="536.26,354.55 541.95,352.61 546.85,354.65 541.11,356.61"/><polygon points="502.09,335.98 507.32,334.23 511.45,335.92 506.17,337.68"/><polygon points="510.34,339.42 515.66,337.64 519.95,339.39 514.59,341.19"/><polygon points="518.92,343.00 524.33,341.18 528.80,343.00 523.34,344.84"/><polygon points="527.85,346.73 533.36,344.86 538.02,346.76 532.45,348.65"/><polygon points="537.15,350.61 542.77,348.70 547.62,350.68 541.95,352.61"/><polygon points="503.26,332.58 508.43,330.86 512.53,332.49 507.32,334.23"/><polygon points="511.45,335.92 516.71,334.16 520.97,335.86 515.66,337.64"/><polygon points="519.95,339.39 525.31,337.59 529.74,339.36 524.33,341.18"/><polygon points="528.80,343.00 534.26,341.16 538.87,343.00 533.36,344.86"/><polygon points="538.02,346.76 543.57,344.88 548.38,346.79 542.77,348.70"/><polygon points="547.62,350.68 553.28,348.75 558.29,350.75 552.58,352.70"/><polygon points="512.53,332.49 517.73,330.75 521.96,332.40 516.71,334.16"/><polygon points="520.97,335.86 526.26,334.08 530.65,335.79 525.31,337.59"/><polygon points="529.74,339.36 535.13,337.54 539.70,339.32 534.26,341.16"/><polygon points="538.87,343.00 544.36,341.14 549.11,343.00 543.57,344.88"/><polygon points="548.38,346.79 553.97,344.89 558.93,346.83 553.28,348.75"/><polygon points="513.59,329.14 518.74,327.42 522.93,329.02 517.73,330.75"/><polygon points="521.96,332.40 527.19,330.65 531.55,332.31 526.26,334.08"/><polygon points="530.65,335.79 535.98,334.00 540.51,335.73 535.13,337.54"/><polygon points="539.70,339.32 545.12,337.49 549.83,339.29 544.36,341.14"/><polygon points="549.11,343.00 554.64,341.13 559.55,343.00 553.97,344.89"/><polygon points="558.93,346.83 564.56,344.91 569.67,346.87 563.99,348.81"/><polygon points="522.93,329.02 528.11,327.29 532.42,328.90 527.19,330.65"/><polygon points="531.55,332.31 536.82,330.54 541.30,332.22 535.98,334.00"/><polygon points="540.51,335.73 545.87,333.92 550.54,335.67 545.12,337.49"/><polygon points="549.83,339.29 555.30,337.44 560.16,339.26 554.64,341.13"/><polygon points="559.55,343.00 565.11,341.11 570.17,343.00 564.56,344.91"/><polygon points="523.88,325.71 529.00,324.00 533.28,325.56 528.11,327.29"/><polygon points="532.42,328.90 537.63,327.15 542.08,328.78 536.82,330.54"/><polygon points="541.30,332.22 546.61,330.43 551.23,332.12 545.87,333.92"/><polygon points="550.54,335.67 555.94,333.84 560.75,335.60 555.30,337.44"/><polygon points="560.16,339.26 565.66,337.39 570.67,339.22 565.11,341.11"/><polygon points="570.17,343.00 575.78,341.09 581.00,343.00 575.34,344.93"/></g><g stroke="#e0e0e0" stroke-width="0.6"><line x1="469.14" y1="341.66" x2="521.63" y2="366.20"/><line x1="467.96" y1="344.35" x2="532.94" y2="322.69"/><line x1="474.35" y1="339.93" x2="527.47" y2="364.20"/><line x1="471.70" y1="346.13" x2="537.25" y2="324.24"/><line x1="479.54" y1="338.20" x2="533.30" y2="362.21"/><line x1="475.51" y1="347.94" x2="541.64" y2="325.81"/><line x1="484.72" y1="336.48" x2="539.11" y2="360.22"/><line x1="479.40" y1="349.79" x2="546.12" y2="327.42"/><line x1="489.89" y1="334.76" x2="544.91" y2="358.24"/><line x1="483.37" y1="351.68" x2="550.68" y2="329.06"/><line x1="495.05" y1="333.04" x2="550.69" y2="356.26"/><line x1="487.42" y1="353.61" x2="555.34" y2="330.74"/><line x1="500.20" y1="331.33" x2="556.46" y2="354.29"/><line x1="491.55" y1="355.57" x2="560.09" y2="332.44"/><line x1="505.33" y1="329.62" x2="562.22" y2="352.32"/><line x1="495.76" y1="357.58" x2="564.94" y2="334.18"/><line x1="510.46" y1="327.91" x2="567.96" y2="350.36"/><line x1="500.06" y1="359.62" x2="569.88" y2="335.96"/><line x1="515.57" y1="326.21" x2="573.69" y2="348.40"/><line x1="504.46" y1="361.71" x2="574.93" y2="337.77"/><line x1="520.67" y1="324.51" x2="579.40" y2="346.44"/><line x1="508.94" y1="363.85" x2="580.08" y2="339.63"/><line x1="525.76" y1="322.82" x2="585.10" y2="344.50"/><line x1="513.53" y1="366.03" x2="585.35" y2="341.52"/></g><g transform="matrix(0.961,-0.278,0.897,0.441,419,339)"><text x="0" y="0" font-family="Liberation Sans" font-size="12" textLength="119" lengthAdjust="spacingAndGlyphs" fill="none" stroke="#f4f4f4" stroke-width="0.7">CoronaVolumeGrid</text></g><g transform="matrix(0.961,-0.278,0.897,0.441,431,344.5)"><text x="0" y="0" font-family="Liberation Sans" font-size="12" textLength="108" lengthAdjust="spacingAndGlyphs" fill="none" stroke="#f4f4f4" stroke-width="0.7" xml:space="preserve">No   data   loaded</text></g><line x1="512" y1="336" x2="512" y2="241" stroke="#8a8a8a" stroke-width="1"/><text x="510" y="240" font-family="Liberation Sans" font-size="8" fill="#8a8a8a">z</text><path d="M453 307L512 336L588 309" fill="none" stroke="#c02020" stroke-width="1"/><path d="M450 301l3 4l3-4M453 305v3" fill="none" stroke="#c02020" stroke-width="0.9"/><path d="M585 302l5 6M590 302l-5 6" fill="none" stroke="#c02020" stroke-width="0.9"/><g transform="translate(-9,-676)"><line x1="35.5" y1="1219.5" x2="35.5" y2="1241.5" stroke="#1010c0" stroke-width="1.3"/><line x1="35.5" y1="1241.5" x2="22.5" y2="1236" stroke="#119911" stroke-width="1.2"/><line x1="35.5" y1="1241.5" x2="55" y2="1236" stroke="#c01010" stroke-width="1.2"/><path d="M36.5 1213.5h3.5l-3.5 5h3.5" fill="none" stroke="#1010c0" stroke-width="1.2"/><path d="M55.5 1230.5l4 5.5M59.5 1230.5l-4 5.5" stroke="#c01010" stroke-width="1.1"/><path d="M21.5 1229.5l2 4M26 1229.5l-3 7" stroke="#119911" stroke-width="1.1" fill="none"/></g></svg><span class="t" style="left:15px;top:684px;font-size:11px;color:#c4c4c4;letter-spacing:0.15px">[+ ] [CoronaCamera001 ] [Standard ] [Default Shading ]</span><svg class="a" style="left:1078px;top:81px" width="389" height="4"><g fill="#a8a8a8" shape-rendering="crispEdges"><rect x="0" y="0" width="1" height="1"/><rect x="2" y="0" width="1" height="1"/><rect x="4" y="0" width="1" height="1"/><rect x="6" y="0" width="1" height="1"/><rect x="8" y="0" width="1" height="1"/><rect x="10" y="0" width="1" height="1"/><rect x="12" y="0" width="1" height="1"/><rect x="14" y="0" width="1" height="1"/><rect x="16" y="0" width="1" height="1"/><rect x="18" y="0" width="1" height="1"/><rect x="20" y="0" width="1" height="1"/><rect x="22" y="0" width="1" height="1"/><rect x="24" y="0" width="1" height="1"/><rect x="26" y="0" width="1" height="1"/><rect x="28" y="0" width="1" height="1"/><rect x="30" y="0" width="1" height="1"/><rect x="32" y="0" width="1" height="1"/><rect x="34" y="0" width="1" height="1"/><rect x="36" y="0" width="1" height="1"/><rect x="38" y="0" width="1" height="1"/><rect x="40" y="0" width="1" height="1"/><rect x="42" y="0" width="1" height="1"/><rect x="44" y="0" width="1" height="1"/><rect x="46" y="0" width="1" height="1"/><rect x="48" y="0" width="1" height="1"/><rect x="50" y="0" width="1" height="1"/><rect x="52" y="0" width="1" height="1"/><rect x="54" y="0" width="1" height="1"/><rect x="56" y="0" width="1" height="1"/><rect x="58" y="0" width="1" height="1"/><rect x="60" y="0" width="1" height="1"/><rect x="62" y="0" width="1" height="1"/><rect x="64" y="0" width="1" height="1"/><rect x="66" y="0" width="1" height="1"/><rect x="68" y="0" width="1" height="1"/><rect x="70" y="0" width="1" height="1"/><rect x="72" y="0" width="1" height="1"/><rect x="74" y="0" width="1" height="1"/><rect x="76" y="0" width="1" height="1"/><rect x="78" y="0" width="1" height="1"/><rect x="80" y="0" width="1" height="1"/><rect x="82" y="0" width="1" height="1"/><rect x="84" y="0" width="1" height="1"/><rect x="86" y="0" width="1" height="1"/><rect x="88" y="0" width="1" height="1"/><rect x="90" y="0" width="1" height="1"/><rect x="92" y="0" width="1" height="1"/><rect x="94" y="0" width="1" height="1"/><rect x="96" y="0" width="1" height="1"/><rect x="98" y="0" width="1" height="1"/><rect x="100" y="0" width="1" height="1"/><rect x="102" y="0" width="1" height="1"/><rect x="104" y="0" width="1" height="1"/><rect x="106" y="0" width="1" height="1"/><rect x="108" y="0" width="1" height="1"/><rect x="110" y="0" width="1" height="1"/><rect x="112" y="0" width="1" height="1"/><rect x="114" y="0" width="1" height="1"/><rect x="116" y="0" width="1" height="1"/><rect x="118" y="0" width="1" height="1"/><rect x="120" y="0" width="1" height="1"/><rect x="122" y="0" width="1" height="1"/><rect x="124" y="0" width="1" height="1"/><rect x="126" y="0" width="1" height="1"/><rect x="128" y="0" width="1" height="1"/><rect x="130" y="0" width="1" height="1"/><rect x="132" y="0" width="1" height="1"/><rect x="134" y="0" width="1" height="1"/><rect x="136" y="0" width="1" height="1"/><rect x="138" y="0" width="1" height="1"/><rect x="140" y="0" width="1" height="1"/><rect x="142" y="0" width="1" height="1"/><rect x="144" y="0" width="1" height="1"/><rect x="146" y="0" width="1" height="1"/><rect x="148" y="0" width="1" height="1"/><rect x="150" y="0" width="1" height="1"/><rect x="152" y="0" width="1" height="1"/><rect x="154" y="0" width="1" height="1"/><rect x="156" y="0" width="1" height="1"/><rect x="158" y="0" width="1" height="1"/><rect x="160" y="0" width="1" height="1"/><rect x="162" y="0" width="1" height="1"/><rect x="164" y="0" width="1" height="1"/><rect x="166" y="0" width="1" height="1"/><rect x="168" y="0" width="1" height="1"/><rect x="170" y="0" width="1" height="1"/><rect x="172" y="0" width="1" height="1"/><rect x="174" y="0" width="1" height="1"/><rect x="176" y="0" width="1" height="1"/><rect x="178" y="0" width="1" height="1"/><rect x="180" y="0" width="1" height="1"/><rect x="182" y="0" width="1" height="1"/><rect x="184" y="0" width="1" height="1"/><rect x="186" y="0" width="1" height="1"/><rect x="188" y="0" width="1" height="1"/><rect x="190" y="0" width="1" height="1"/><rect x="192" y="0" width="1" height="1"/><rect x="194" y="0" width="1" height="1"/><rect x="196" y="0" width="1" height="1"/><rect x="198" y="0" width="1" height="1"/><rect x="200" y="0" width="1" height="1"/><rect x="202" y="0" width="1" height="1"/><rect x="204" y="0" width="1" height="1"/><rect x="206" y="0" width="1" height="1"/><rect x="208" y="0" width="1" height="1"/><rect x="210" y="0" width="1" height="1"/><rect x="212" y="0" width="1" height="1"/><rect x="214" y="0" width="1" height="1"/><rect x="216" y="0" width="1" height="1"/><rect x="218" y="0" width="1" height="1"/><rect x="220" y="0" width="1" height="1"/><rect x="222" y="0" width="1" height="1"/><rect x="224" y="0" width="1" height="1"/><rect x="226" y="0" width="1" height="1"/><rect x="228" y="0" width="1" height="1"/><rect x="230" y="0" width="1" height="1"/><rect x="232" y="0" width="1" height="1"/><rect x="234" y="0" width="1" height="1"/><rect x="236" y="0" width="1" height="1"/><rect x="238" y="0" width="1" height="1"/><rect x="240" y="0" width="1" height="1"/><rect x="242" y="0" width="1" height="1"/><rect x="244" y="0" width="1" height="1"/><rect x="246" y="0" width="1" height="1"/><rect x="248" y="0" width="1" height="1"/><rect x="250" y="0" width="1" height="1"/><rect x="252" y="0" width="1" height="1"/><rect x="254" y="0" width="1" height="1"/><rect x="256" y="0" width="1" height="1"/><rect x="258" y="0" width="1" height="1"/><rect x="260" y="0" width="1" height="1"/><rect x="262" y="0" width="1" height="1"/><rect x="264" y="0" width="1" height="1"/><rect x="266" y="0" width="1" height="1"/><rect x="268" y="0" width="1" height="1"/><rect x="270" y="0" width="1" height="1"/><rect x="272" y="0" width="1" height="1"/><rect x="274" y="0" width="1" height="1"/><rect x="276" y="0" width="1" height="1"/><rect x="278" y="0" width="1" height="1"/><rect x="280" y="0" width="1" height="1"/><rect x="282" y="0" width="1" height="1"/><rect x="284" y="0" width="1" height="1"/><rect x="286" y="0" width="1" height="1"/><rect x="288" y="0" width="1" height="1"/><rect x="290" y="0" width="1" height="1"/><rect x="292" y="0" width="1" height="1"/><rect x="294" y="0" width="1" height="1"/><rect x="296" y="0" width="1" height="1"/><rect x="298" y="0" width="1" height="1"/><rect x="300" y="0" width="1" height="1"/><rect x="302" y="0" width="1" height="1"/><rect x="304" y="0" width="1" height="1"/><rect x="306" y="0" width="1" height="1"/><rect x="308" y="0" width="1" height="1"/><rect x="310" y="0" width="1" height="1"/><rect x="312" y="0" width="1" height="1"/><rect x="314" y="0" width="1" height="1"/><rect x="316" y="0" width="1" height="1"/><rect x="318" y="0" width="1" height="1"/><rect x="320" y="0" width="1" height="1"/><rect x="322" y="0" width="1" height="1"/><rect x="324" y="0" width="1" height="1"/><rect x="326" y="0" width="1" height="1"/><rect x="328" y="0" width="1" height="1"/><rect x="330" y="0" width="1" height="1"/><rect x="332" y="0" width="1" height="1"/><rect x="334" y="0" width="1" height="1"/><rect x="336" y="0" width="1" height="1"/><rect x="338" y="0" width="1" height="1"/><rect x="340" y="0" width="1" height="1"/><rect x="342" y="0" width="1" height="1"/><rect x="344" y="0" width="1" height="1"/><rect x="346" y="0" width="1" height="1"/><rect x="348" y="0" width="1" height="1"/><rect x="350" y="0" width="1" height="1"/><rect x="352" y="0" width="1" height="1"/><rect x="354" y="0" width="1" height="1"/><rect x="356" y="0" width="1" height="1"/><rect x="358" y="0" width="1" height="1"/><rect x="360" y="0" width="1" height="1"/><rect x="362" y="0" width="1" height="1"/><rect x="364" y="0" width="1" height="1"/><rect x="366" y="0" width="1" height="1"/><rect x="368" y="0" width="1" height="1"/><rect x="370" y="0" width="1" height="1"/><rect x="372" y="0" width="1" height="1"/><rect x="374" y="0" width="1" height="1"/><rect x="376" y="0" width="1" height="1"/><rect x="378" y="0" width="1" height="1"/><rect x="380" y="0" width="1" height="1"/><rect x="382" y="0" width="1" height="1"/><rect x="384" y="0" width="1" height="1"/><rect x="386" y="0" width="1" height="1"/><rect x="388" y="0" width="1" height="1"/><rect x="1" y="2" width="1" height="1"/><rect x="3" y="2" width="1" height="1"/><rect x="5" y="2" width="1" height="1"/><rect x="7" y="2" width="1" height="1"/><rect x="9" y="2" width="1" height="1"/><rect x="11" y="2" width="1" height="1"/><rect x="13" y="2" width="1" height="1"/><rect x="15" y="2" width="1" height="1"/><rect x="17" y="2" width="1" height="1"/><rect x="19" y="2" width="1" height="1"/><rect x="21" y="2" width="1" height="1"/><rect x="23" y="2" width="1" height="1"/><rect x="25" y="2" width="1" height="1"/><rect x="27" y="2" width="1" height="1"/><rect x="29" y="2" width="1" height="1"/><rect x="31" y="2" width="1" height="1"/><rect x="33" y="2" width="1" height="1"/><rect x="35" y="2" width="1" height="1"/><rect x="37" y="2" width="1" height="1"/><rect x="39" y="2" width="1" height="1"/><rect x="41" y="2" width="1" height="1"/><rect x="43" y="2" width="1" height="1"/><rect x="45" y="2" width="1" height="1"/><rect x="47" y="2" width="1" height="1"/><rect x="49" y="2" width="1" height="1"/><rect x="51" y="2" width="1" height="1"/><rect x="53" y="2" width="1" height="1"/><rect x="55" y="2" width="1" height="1"/><rect x="57" y="2" width="1" height="1"/><rect x="59" y="2" width="1" height="1"/><rect x="61" y="2" width="1" height="1"/><rect x="63" y="2" width="1" height="1"/><rect x="65" y="2" width="1" height="1"/><rect x="67" y="2" width="1" height="1"/><rect x="69" y="2" width="1" height="1"/><rect x="71" y="2" width="1" height="1"/><rect x="73" y="2" width="1" height="1"/><rect x="75" y="2" width="1" height="1"/><rect x="77" y="2" width="1" height="1"/><rect x="79" y="2" width="1" height="1"/><rect x="81" y="2" width="1" height="1"/><rect x="83" y="2" width="1" height="1"/><rect x="85" y="2" width="1" height="1"/><rect x="87" y="2" width="1" height="1"/><rect x="89" y="2" width="1" height="1"/><rect x="91" y="2" width="1" height="1"/><rect x="93" y="2" width="1" height="1"/><rect x="95" y="2" width="1" height="1"/><rect x="97" y="2" width="1" height="1"/><rect x="99" y="2" width="1" height="1"/><rect x="101" y="2" width="1" height="1"/><rect x="103" y="2" width="1" height="1"/><rect x="105" y="2" width="1" height="1"/><rect x="107" y="2" width="1" height="1"/><rect x="109" y="2" width="1" height="1"/><rect x="111" y="2" width="1" height="1"/><rect x="113" y="2" width="1" height="1"/><rect x="115" y="2" width="1" height="1"/><rect x="117" y="2" width="1" height="1"/><rect x="119" y="2" width="1" height="1"/><rect x="121" y="2" width="1" height="1"/><rect x="123" y="2" width="1" height="1"/><rect x="125" y="2" width="1" height="1"/><rect x="127" y="2" width="1" height="1"/><rect x="129" y="2" width="1" height="1"/><rect x="131" y="2" width="1" height="1"/><rect x="133" y="2" width="1" height="1"/><rect x="135" y="2" width="1" height="1"/><rect x="137" y="2" width="1" height="1"/><rect x="139" y="2" width="1" height="1"/><rect x="141" y="2" width="1" height="1"/><rect x="143" y="2" width="1" height="1"/><rect x="145" y="2" width="1" height="1"/><rect x="147" y="2" width="1" height="1"/><rect x="149" y="2" width="1" height="1"/><rect x="151" y="2" width="1" height="1"/><rect x="153" y="2" width="1" height="1"/><rect x="155" y="2" width="1" height="1"/><rect x="157" y="2" width="1" height="1"/><rect x="159" y="2" width="1" height="1"/><rect x="161" y="2" width="1" height="1"/><rect x="163" y="2" width="1" height="1"/><rect x="165" y="2" width="1" height="1"/><rect x="167" y="2" width="1" height="1"/><rect x="169" y="2" width="1" height="1"/><rect x="171" y="2" width="1" height="1"/><rect x="173" y="2" width="1" height="1"/><rect x="175" y="2" width="1" height="1"/><rect x="177" y="2" width="1" height="1"/><rect x="179" y="2" width="1" height="1"/><rect x="181" y="2" width="1" height="1"/><rect x="183" y="2" width="1" height="1"/><rect x="185" y="2" width="1" height="1"/><rect x="187" y="2" width="1" height="1"/><rect x="189" y="2" width="1" height="1"/><rect x="191" y="2" width="1" height="1"/><rect x="193" y="2" width="1" height="1"/><rect x="195" y="2" width="1" height="1"/><rect x="197" y="2" width="1" height="1"/><rect x="199" y="2" width="1" height="1"/><rect x="201" y="2" width="1" height="1"/><rect x="203" y="2" width="1" height="1"/><rect x="205" y="2" width="1" height="1"/><rect x="207" y="2" width="1" height="1"/><rect x="209" y="2" width="1" height="1"/><rect x="211" y="2" width="1" height="1"/><rect x="213" y="2" width="1" height="1"/><rect x="215" y="2" width="1" height="1"/><rect x="217" y="2" width="1" height="1"/><rect x="219" y="2" width="1" height="1"/><rect x="221" y="2" width="1" height="1"/><rect x="223" y="2" width="1" height="1"/><rect x="225" y="2" width="1" height="1"/><rect x="227" y="2" width="1" height="1"/><rect x="229" y="2" width="1" height="1"/><rect x="231" y="2" width="1" height="1"/><rect x="233" y="2" width="1" height="1"/><rect x="235" y="2" width="1" height="1"/><rect x="237" y="2" width="1" height="1"/><rect x="239" y="2" width="1" height="1"/><rect x="241" y="2" width="1" height="1"/><rect x="243" y="2" width="1" height="1"/><rect x="245" y="2" width="1" height="1"/><rect x="247" y="2" width="1" height="1"/><rect x="249" y="2" width="1" height="1"/><rect x="251" y="2" width="1" height="1"/><rect x="253" y="2" width="1" height="1"/><rect x="255" y="2" width="1" height="1"/><rect x="257" y="2" width="1" height="1"/><rect x="259" y="2" width="1" height="1"/><rect x="261" y="2" width="1" height="1"/><rect x="263" y="2" width="1" height="1"/><rect x="265" y="2" width="1" height="1"/><rect x="267" y="2" width="1" height="1"/><rect x="269" y="2" width="1" height="1"/><rect x="271" y="2" width="1" height="1"/><rect x="273" y="2" width="1" height="1"/><rect x="275" y="2" width="1" height="1"/><rect x="277" y="2" width="1" height="1"/><rect x="279" y="2" width="1" height="1"/><rect x="281" y="2" width="1" height="1"/><rect x="283" y="2" width="1" height="1"/><rect x="285" y="2" width="1" height="1"/><rect x="287" y="2" width="1" height="1"/><rect x="289" y="2" width="1" height="1"/><rect x="291" y="2" width="1" height="1"/><rect x="293" y="2" width="1" height="1"/><rect x="295" y="2" width="1" height="1"/><rect x="297" y="2" width="1" height="1"/><rect x="299" y="2" width="1" height="1"/><rect x="301" y="2" width="1" height="1"/><rect x="303" y="2" width="1" height="1"/><rect x="305" y="2" width="1" height="1"/><rect x="307" y="2" width="1" height="1"/><rect x="309" y="2" width="1" height="1"/><rect x="311" y="2" width="1" height="1"/><rect x="313" y="2" width="1" height="1"/><rect x="315" y="2" width="1" height="1"/><rect x="317" y="2" width="1" height="1"/><rect x="319" y="2" width="1" height="1"/><rect x="321" y="2" width="1" height="1"/><rect x="323" y="2" width="1" height="1"/><rect x="325" y="2" width="1" height="1"/><rect x="327" y="2" width="1" height="1"/><rect x="329" y="2" width="1" height="1"/><rect x="331" y="2" width="1" height="1"/><rect x="333" y="2" width="1" height="1"/><rect x="335" y="2" width="1" height="1"/><rect x="337" y="2" width="1" height="1"/><rect x="339" y="2" width="1" height="1"/><rect x="341" y="2" width="1" height="1"/><rect x="343" y="2" width="1" height="1"/><rect x="345" y="2" width="1" height="1"/><rect x="347" y="2" width="1" height="1"/><rect x="349" y="2" width="1" height="1"/><rect x="351" y="2" width="1" height="1"/><rect x="353" y="2" width="1" height="1"/><rect x="355" y="2" width="1" height="1"/><rect x="357" y="2" width="1" height="1"/><rect x="359" y="2" width="1" height="1"/><rect x="361" y="2" width="1" height="1"/><rect x="363" y="2" width="1" height="1"/><rect x="365" y="2" width="1" height="1"/><rect x="367" y="2" width="1" height="1"/><rect x="369" y="2" width="1" height="1"/><rect x="371" y="2" width="1" height="1"/><rect x="373" y="2" width="1" height="1"/><rect x="375" y="2" width="1" height="1"/><rect x="377" y="2" width="1" height="1"/><rect x="379" y="2" width="1" height="1"/><rect x="381" y="2" width="1" height="1"/><rect x="383" y="2" width="1" height="1"/><rect x="385" y="2" width="1" height="1"/><rect x="387" y="2" width="1" height="1"/><rect x="389" y="2" width="1" height="1"/></g></svg><div class="a" style="left:1076px;top:88px;width:30px;height:27px;background:#383838;border-radius:4px 4px 0 0"></div><div class="a" style="left:1140px;top:88px;width:30px;height:27px;background:#383838;border-radius:4px 4px 0 0"></div><div class="a" style="left:1172px;top:88px;width:30px;height:27px;background:#383838;border-radius:4px 4px 0 0"></div><div class="a" style="left:1204px;top:88px;width:30px;height:27px;background:#383838;border-radius:4px 4px 0 0"></div><div class="a" style="left:1236px;top:88px;width:30px;height:27px;background:#383838;border-radius:4px 4px 0 0"></div><div class="a" style="left:1076px;top:114px;width:391px;height:1155px;background:#454545;border-top:1px solid #3a3a3a;border-left:1px solid #3a3a3a;border-radius:3px 3px 0 0"></div><div class="a" style="left:1076px;top:88px;width:1px;height:30px;background:#383838;"></div><div class="a" style="left:1109px;top:88px;width:30px;height:28px;background:#454545;border-radius:4px 4px 0 0;border:1px solid #3a3a3a;border-bottom:none"></div><svg class="a" style="left:1076px;top:88px" width="195" height="27"><path d="M16 6v16M8 14h16" stroke="#a2a2a2" stroke-width="2.6"/><g fill="none" stroke="#3cc0c0" stroke-width="1.2"><rect x="40.5" y="5.5" width="2.6" height="2.6"/><rect x="53" y="5.5" width="2.6" height="2.6"/><rect x="40.5" y="18.3" width="2.6" height="2.6"/><rect x="53" y="18.3" width="2.6" height="2.6"/><path d="M41.8 8.1v10.2M54.3 8.1v10.2M43.1 6.8h9.9M43.1 19.6h9.9"/></g><path d="M44.5 18.2C44.8 13.5 47.5 10.3 52.5 9.6" fill="none" stroke="#d4d4d4" stroke-width="2"/><g transform="translate(66.5,2) scale(0.88)"><rect x="9" y="4" width="12" height="5" fill="#a0a0a0"/><path d="M15 9v4M8.5 17v-3.5h13V17" fill="none" stroke="#3cb8b8" stroke-width="1.4"/><rect x="6.5" y="17" width="4" height="4" fill="#3cb8b8"/><rect x="19.5" y="17" width="4" height="4" fill="#3cb8b8"/></g><g transform="translate(96,0)"><path d="M11 7.5C6.5 8.5 6.5 18.5 11 19.5" fill="none" stroke="#2a9a9a" stroke-width="1"/><path d="M13 7C8.5 8.5 8.5 18.5 13 20" fill="none" stroke="#3cb8b8" stroke-width="1"/><circle cx="17.5" cy="13.5" r="6.3" fill="#a0a0a0"/></g><g transform="translate(128,0)"><rect x="6" y="7" width="16" height="9" fill="#a0a0a0"/><rect x="13" y="17" width="2" height="2" fill="#a0a0a0"/><rect x="9" y="19" width="10" height="1.3" fill="#a0a0a0"/></g><g transform="translate(160,0)"><path d="M11.5 10L21 19.5" stroke="#a0a0a0" stroke-width="2.6" stroke-linecap="round"/><circle cx="10.3" cy="8.8" r="3.9" fill="#a0a0a0"/><path d="M6 6.6L9.3 3.5L11.2 5.6L8.2 8.6Z" fill="#383838"/><circle cx="20.8" cy="19.3" r="0.9" fill="#383838"/></g></svg><div class="a" style="left:1082px;top:123px;width:166px;height:18px;background:#676767;border:1px solid #3a3a3a"></div><span class="t" style="left:1087px;top:125px;font-size:11px;line-height:14px;color:#e6e6e6;">Corona VolumeGrid001</span><div class="a" style="left:1253px;top:122px;width:17px;height:20px;background:#cfcdf3;border:1px solid #000"></div><div class="a" style="left:1082px;top:152px;width:189px;height:19px;background:#676767;border:1px solid #3d3d3d"></div><span class="t" style="left:1084px;top:155px;font-size:11px;line-height:14px;color:#e2e2e2;">Modifier List</span><div class="arr" style="left:1256px;top:160px;border-left-width:4px;border-right-width:4px;border-top-width:5px;border-top-color:#d8d8d8"></div><div class="a" style="left:1081px;top:176px;width:191px;height:328px;background:#464646;border:2px solid #f2f2f2"></div><div class="a" style="left:1083px;top:178px;width:187px;height:16px;background:#5b87c0;"></div><span class="t" style="left:1104px;top:179.5px;font-size:11px;line-height:14px;color:#f4f4f4;">CoronaVolumeGrid</span><svg class="a" style="left:1084px;top:508px" width="150" height="26"><path d="M3 20L9 14" stroke="#bbb" stroke-width="1.2"/><path d="M8 9L13 6L17 10L14 15Z" fill="#cfcfcf"/><path d="M9 12L15 9" stroke="#cfcfcf" stroke-width="3"/><rect x="27" y="6" width="1.5" height="14" fill="#111"/><rect x="34" y="2" width="21.5" height="22" rx="3" fill="#5b87c3"/><path d="M41 5h7.5M42.5 5v13.5a2.2 2.2 0 0 0 4.5 0V5" fill="#e8e8e8" stroke="#e8e8e8" stroke-width="1.5"/><rect x="43.8" y="7" width="1.8" height="11" fill="#3cbcbc"/><rect x="63" y="6" width="1.5" height="14" fill="#111"/><circle cx="77.5" cy="10.5" r="3.6" fill="#5a5a5a" stroke="#262626" stroke-width="1.2"/><path d="M81 10.5h4.5v3" fill="none" stroke="#262626" stroke-width="1.4"/><g fill="none" stroke="#262626" stroke-width="1.5"><circle cx="80" cy="19.5" r="3.8"/><circle cx="85" cy="18.5" r="3.5"/></g><g fill="none" stroke="#262626" stroke-width="1.4"><path d="M100 8.5h11M103.5 8.5V6.5h4v2"/><path d="M101.5 10h8v11.5h-8Z"/><path d="M104 12v8M107 12v8"/></g><rect x="123" y="6" width="1.5" height="14" fill="#111"/><rect x="134" y="6" width="12" height="14" fill="#ddd" stroke="#333" stroke-width="0.6"/><g fill="#333"><rect x="135.5" y="9" width="3.5" height="3.5"/><rect x="140.5" y="9" width="3.5" height="3.5"/><rect x="135.5" y="14.5" width="3.5" height="3.5"/><rect x="140.5" y="14.5" width="3.5" height="3.5"/></g><path d="M140 14L147.5 5.5" stroke="#f2b822" stroke-width="2.4"/></svg><div class="a" style="left:1086px;top:550px;width:80px;height:1px;background:#666;"></div><div class="a" style="left:1186px;top:550px;width:80px;height:1px;background:#666;"></div><svg class="a" style="left:1169px;top:548px" width="14" height="4"><rect x="0" y="0.0" width="1" height="1" fill="#ccc"/><rect x="2" y="1.5" width="1" height="1" fill="#ccc"/><rect x="4" y="0.0" width="1" height="1" fill="#ccc"/><rect x="6" y="1.5" width="1" height="1" fill="#ccc"/><rect x="8" y="0.0" width="1" height="1" fill="#ccc"/><rect x="10" y="1.5" width="1" height="1" fill="#ccc"/><rect x="12" y="0.0" width="1" height="1" fill="#ccc"/></svg><div class="a" style="left:1266px;top:558px;width:6px;height:707px;background:#3c3c3c;border-radius:3px"></div><div class="a" style="left:1267px;top:559px;width:4px;height:683px;background:#555;border-radius:2px"></div><div class="a" style="left:1081px;top:558px;width:182px;height:127px;background:#525252;border-radius:3px"></div><svg class="a" style="left:1087px;top:566px" width="7" height="5"><path d="M0.2 0.5H6.2L3.2 4.3Z" fill="#b4b4b4"/></svg><span class="tb" style="left:1100px;top:560.5px;font-size:11.5px;line-height:14.5px;">Corona VolumeGrid</span><svg class="a" style="left:1250px;top:564px" width="8" height="8"><rect x="0.00" y="0.00" width="1.25" height="1.25" fill="#b8b8b8"/><rect x="0.00" y="2.05" width="1.25" height="1.25" fill="#b8b8b8"/><rect x="0.00" y="4.10" width="1.25" height="1.25" fill="#b8b8b8"/><rect x="2.05" y="0.00" width="1.25" height="1.25" fill="#b8b8b8"/><rect x="2.05" y="2.05" width="1.25" height="1.25" fill="#b8b8b8"/><rect x="2.05" y="4.10" width="1.25" height="1.25" fill="#b8b8b8"/><rect x="4.10" y="0.00" width="1.25" height="1.25" fill="#b8b8b8"/><rect x="4.10" y="2.05" width="1.25" height="1.25" fill="#b8b8b8"/><rect x="4.10" y="4.10" width="1.25" height="1.25" fill="#b8b8b8"/></svg><div class="a" style="left:1091px;top:577px;width:163px;height:38px;background:transparent;border:3px solid #ff0000"></div><div class="btn" style="left:1100px;top:586px;width:141px;height:22px;line-height:24px;background:#666666;color:#e4e4e4;font-size:11px;border-radius:3px">Load from file...</div><div class="btn" style="left:1100px;top:619px;width:141px;height:22px;line-height:24px;background:#666666;color:#e4e4e4;font-size:11px;border-radius:3px">Reload from disk</div><div class="btn" style="left:1100px;top:651px;width:141px;height:22px;line-height:24px;background:#666666;color:#e4e4e4;font-size:11px;border-radius:3px">Online help</div><svg class="a" style="left:1030px;top:590px" width="58" height="18"><path d="M3 10L42 8.5" stroke="#ff0000" stroke-width="3.2" stroke-linecap="round"/><path d="M40 4L54.5 8.5L40 13.5Z" fill="#ff0000"/></svg><div class="a" style="left:1081px;top:689px;width:182px;height:143px;background:#525252;border-radius:3px"></div><svg class="a" style="left:1087px;top:697px" width="7" height="5"><path d="M0.2 0.5H6.2L3.2 4.3Z" fill="#b4b4b4"/></svg><span class="tb" style="left:1100px;top:691.5px;font-size:11.5px;line-height:14.5px;">Animation</span><svg class="a" style="left:1250px;top:695px" width="8" height="8"><rect x="0.00" y="0.00" width="1.25" height="1.25" fill="#b8b8b8"/><rect x="0.00" y="2.05" width="1.25" height="1.25" fill="#b8b8b8"/><rect x="0.00" y="4.10" width="1.25" height="1.25" fill="#b8b8b8"/><rect x="2.05" y="0.00" width="1.25" height="1.25" fill="#b8b8b8"/><rect x="2.05" y="2.05" width="1.25" height="1.25" fill="#b8b8b8"/><rect x="2.05" y="4.10" width="1.25" height="1.25" fill="#b8b8b8"/><rect x="4.10" y="0.00" width="1.25" height="1.25" fill="#b8b8b8"/><rect x="4.10" y="2.05" width="1.25" height="1.25" fill="#b8b8b8"/><rect x="4.10" y="4.10" width="1.25" height="1.25" fill="#b8b8b8"/></svg><span class="t" style="left:1106px;top:716px;font-size:11px;line-height:14px;">Mode:</span><div class="a" style="left:1145px;top:714px;width:103px;height:19px;background:#666666;"></div><span class="t" style="left:1150px;top:717px;font-size:11px;line-height:14px;color:#e4e4e4;">Repeat</span><div class="arr" style="left:1234px;top:721px;border-left-width:4px;border-right-width:4px;border-top-width:5px;border-top-color:#d8d8d8"></div><span class="t" style="right:286px;top:741px;font-size:11px;line-height:14px;">Frame offset:</span><div class="a" style="left:1190px;top:742px;width:55px;height:14px;background:#585858;"></div><span class="t" style="left:1194px;top:742px;font-size:11px;line-height:14px;color:#8a8a8a;">0.0</span><svg class="a" style="left:1235px;top:743px" width="8" height="12"><path d="M4.4 1.6L6.9 5H1.9Z M1.9 7H6.9L4.4 10.4Z" fill="#8a8a8a"/></svg><span class="t" style="right:286px;top:757px;font-size:11px;line-height:14px;">Start:</span><div class="a" style="left:1190px;top:758px;width:55px;height:14px;background:#626262;"></div><span class="t" style="left:1194px;top:758px;font-size:11px;line-height:14px;color:#e4e4e4;">0</span><svg class="a" style="left:1235px;top:759px" width="8" height="12"><path d="M4.4 1.6L6.9 5H1.9Z M1.9 7H6.9L4.4 10.4Z" fill="#d0d0d0"/></svg><span class="t" style="right:286px;top:773px;font-size:11px;line-height:14px;">Length:</span><div class="a" style="left:1190px;top:774px;width:55px;height:14px;background:#626262;"></div><span class="t" style="left:1194px;top:774px;font-size:11px;line-height:14px;color:#e4e4e4;">96</span><svg class="a" style="left:1235px;top:775px" width="8" height="12"><path d="M4.4 1.6L6.9 5H1.9Z M1.9 7H6.9L4.4 10.4Z" fill="#d0d0d0"/></svg><span class="t" style="right:286px;top:789px;font-size:11px;line-height:14px;">Speed multiplier:</span><div class="a" style="left:1190px;top:790px;width:55px;height:14px;background:#585858;"></div><span class="t" style="left:1194px;top:790px;font-size:11px;line-height:14px;color:#8a8a8a;">1.0</span><svg class="a" style="left:1235px;top:791px" width="8" height="12"><path d="M4.4 1.6L6.9 5H1.9Z M1.9 7H6.9L4.4 10.4Z" fill="#8a8a8a"/></svg><div class="a" style="left:1100px;top:809px;width:10px;height:10px;background:#575757;"></div><span class="t" style="left:1112px;top:808px;font-size:11px;line-height:14px;color:#8c8c8c;">Load nearest if missing</span><div class="a" style="left:1081px;top:836px;width:182px;height:432px;background:#525252;border-radius:3px"></div><svg class="a" style="left:1087px;top:844px" width="7" height="5"><path d="M0.2 0.5H6.2L3.2 4.3Z" fill="#b4b4b4"/></svg><span class="tb" style="left:1100px;top:838.5px;font-size:11.5px;line-height:14.5px;">Shading</span><svg class="a" style="left:1250px;top:842px" width="8" height="8"><rect x="0.00" y="0.00" width="1.25" height="1.25" fill="#b8b8b8"/><rect x="0.00" y="2.05" width="1.25" height="1.25" fill="#b8b8b8"/><rect x="0.00" y="4.10" width="1.25" height="1.25" fill="#b8b8b8"/><rect x="2.05" y="0.00" width="1.25" height="1.25" fill="#b8b8b8"/><rect x="2.05" y="2.05" width="1.25" height="1.25" fill="#b8b8b8"/><rect x="2.05" y="4.10" width="1.25" height="1.25" fill="#b8b8b8"/><rect x="4.10" y="0.00" width="1.25" height="1.25" fill="#b8b8b8"/><rect x="4.10" y="2.05" width="1.25" height="1.25" fill="#b8b8b8"/><rect x="4.10" y="4.10" width="1.25" height="1.25" fill="#b8b8b8"/></svg><div class="gb" style="left:1091px;top:861px;width:161px;height:156px"></div><div class="a" style="left:1094px;top:859px;width:46px;height:4px;background:#525252;"></div><span class="t" style="left:1096px;top:854px;font-size:11px;line-height:14px;color:#ececec;">Emission</span><span class="t" style="left:1096px;top:873px;font-size:11px;line-height:14px;">Channel:</span><div class="a" style="left:1145px;top:871px;width:88px;height:19px;background:#666666;"></div><div class="a" style="left:1212px;top:871px;width:21px;height:19px;background:#5d5d5d;"></div><span class="t" style="left:1150px;top:874px;font-size:11px;line-height:14px;color:#e4e4e4;">constant</span><div class="arr" style="left:1218px;top:878px;border-left-width:4px;border-right-width:4px;border-top-width:5px;border-top-color:#8e8e8e"></div><div class="a" style="left:1236px;top:876px;width:11px;height:10px;background:#5c5c5c;"></div><svg class="a" style="left:1236px;top:876px" width="11" height="10"><path d="M2.2 5.2L4.3 7.6L8.8 2" fill="none" stroke="#f0f0f0" stroke-width="1.7"/></svg><span class="t" style="left:1096px;top:897px;font-size:11px;line-height:14px;">Tint:</span><div class="a" style="left:1122px;top:898px;width:36px;height:14px;background:#ffffff;border:1px solid #000"></div><div class="btn" style="left:1160px;top:898px;width:73px;height:14px;line-height:16px;background:#666666;color:#e4e4e4;font-size:11px;border-radius:3px">No Map</div><div class="a" style="left:1236px;top:900px;width:11px;height:10px;background:#5c5c5c;"></div><svg class="a" style="left:1236px;top:900px" width="11" height="10"><path d="M2.2 5.2L4.3 7.6L8.8 2" fill="none" stroke="#f0f0f0" stroke-width="1.7"/></svg><span class="t" style="left:1096px;top:922px;font-size:11px;line-height:14px;">Mode:</span><div class="a" style="left:1130px;top:919px;width:103px;height:19px;background:#666666;"></div><span class="t" style="left:1135px;top:922px;font-size:11px;line-height:14px;color:#e4e4e4;">Blackbody</span><div class="arr" style="left:1219px;top:926px;border-left-width:4px;border-right-width:4px;border-top-width:5px;border-top-color:#d8d8d8"></div><span class="t" style="left:1096px;top:946px;font-size:11px;line-height:14px;">Scale:</span><div class="a" style="left:1175px;top:947px;width:55px;height:14px;background:#626262;"></div><span class="t" style="left:1179px;top:947px;font-size:11px;line-height:14px;color:#e4e4e4;">1.0</span><svg class="a" style="left:1220px;top:948px" width="8" height="12"><path d="M4.4 1.6L6.9 5H1.9Z M1.9 7H6.9L4.4 10.4Z" fill="#d0d0d0"/></svg><span class="t" style="left:1096px;top:962px;font-size:11px;line-height:14px;">Temp. scale:</span><div class="a" style="left:1175px;top:963px;width:55px;height:14px;background:#626262;"></div><span class="t" style="left:1179px;top:963px;font-size:11px;line-height:14px;color:#e4e4e4;">3600.0</span><svg class="a" style="left:1220px;top:964px" width="8" height="12"><path d="M4.4 1.6L6.9 5H1.9Z M1.9 7H6.9L4.4 10.4Z" fill="#d0d0d0"/></svg><div class="btn" style="left:1100px;top:988px;width:133px;height:22px;line-height:24px;background:#666666;color:#e4e4e4;font-size:11px;border-radius:3px">Channel color mapping...</div><div class="gb" style="left:1091px;top:1025px;width:161px;height:114px"></div><div class="a" style="left:1094px;top:1023px;width:57px;height:4px;background:#525252;"></div><span class="t" style="left:1096px;top:1018px;font-size:11px;line-height:14px;color:#ececec;">Absorption</span><span class="t" style="left:1096px;top:1037px;font-size:11px;line-height:14px;">Channel:</span><div class="a" style="left:1145px;top:1035px;width:88px;height:19px;background:#666666;"></div><div class="a" style="left:1212px;top:1035px;width:21px;height:19px;background:#5d5d5d;"></div><span class="t" style="left:1150px;top:1038px;font-size:11px;line-height:14px;color:#e4e4e4;">constant</span><div class="arr" style="left:1218px;top:1042px;border-left-width:4px;border-right-width:4px;border-top-width:5px;border-top-color:#8e8e8e"></div><div class="a" style="left:1236px;top:1040px;width:11px;height:10px;background:#5c5c5c;"></div><svg class="a" style="left:1236px;top:1040px" width="11" height="10"><path d="M2.2 5.2L4.3 7.6L8.8 2" fill="none" stroke="#f0f0f0" stroke-width="1.7"/></svg><span class="t" style="left:1096px;top:1061px;font-size:11px;line-height:14px;">Tint:</span><div class="a" style="left:1122px;top:1062px;width:37px;height:14px;background:#ffffff;border:1px solid #000"></div><div class="btn" style="left:1160px;top:1062px;width:73px;height:14px;line-height:16px;background:#666666;color:#e4e4e4;font-size:11px;border-radius:3px">No Map</div><div class="a" style="left:1236px;top:1064px;width:11px;height:10px;background:#5c5c5c;"></div><svg class="a" style="left:1236px;top:1064px" width="11" height="10"><path d="M2.2 5.2L4.3 7.6L8.8 2" fill="none" stroke="#f0f0f0" stroke-width="1.7"/></svg><span class="t" style="left:1096px;top:1079px;font-size:11px;line-height:14px;">Scale:</span><div class="a" style="left:1182px;top:1080px;width:48px;height:14px;background:#626262;"></div><span class="t" style="left:1186px;top:1080px;font-size:11px;line-height:14px;color:#e4e4e4;">1.0</span><svg class="a" style="left:1220px;top:1081px" width="8" height="12"><path d="M4.4 1.6L6.9 5H1.9Z M1.9 7H6.9L4.4 10.4Z" fill="#d0d0d0"/></svg><div class="btn" style="left:1100px;top:1103px;width:133px;height:22px;line-height:24px;background:#666666;color:#e4e4e4;font-size:11px;border-radius:3px">Channel color mapping...</div><div class="a" style="left:1236px;top:1110px;width:11px;height:10px;background:#5c5c5c;"></div><svg class="a" style="left:1236px;top:1110px" width="11" height="10"><path d="M2.2 5.2L4.3 7.6L8.8 2" fill="none" stroke="#f0f0f0" stroke-width="1.7"/></svg><div class="gb" style="left:1091px;top:1146px;width:161px;height:130px"></div><div class="a" style="left:1094px;top:1144px;width:53px;height:4px;background:#525252;"></div><span class="t" style="left:1096px;top:1139px;font-size:11px;line-height:14px;color:#ececec;">Scattering</span><span class="t" style="left:1099px;top:1157px;font-size:11px;line-height:14px;">Channel:</span><div class="a" style="left:1145px;top:1155px;width:88px;height:19px;background:#585858;"></div><span class="t" style="left:1150px;top:1158px;font-size:11px;line-height:14px;color:#8a8a8a;">constant</span><div class="arr" style="left:1218px;top:1162px;border-left-width:4px;border-right-width:4px;border-top-width:5px;border-top-color:#8e8e8e"></div><div class="a" style="left:1236px;top:1160px;width:11px;height:10px;background:#5c5c5c;"></div><span class="t" style="left:1096px;top:1182px;font-size:11px;line-height:14px;">Tint:</span><div class="a" style="left:1122px;top:1183px;width:36px;height:14px;background:#ffffff;border:1px solid #6a6a6a"></div><div class="btn" style="left:1160px;top:1183px;width:73px;height:14px;line-height:16px;background:#5a5a5a;color:#8c8c8c;font-size:11px;border-radius:3px">No Map</div><div class="a" style="left:1236px;top:1186px;width:11px;height:10px;background:#575757;"></div><svg class="a" style="left:1236px;top:1186px" width="11" height="10"><path d="M2.2 5.2L4.3 7.6L8.8 2" fill="none" stroke="#8a8a8a" stroke-width="1.7"/></svg><span class="t" style="left:1096px;top:1200px;font-size:11px;line-height:14px;">Scale:</span><div class="a" style="left:1182px;top:1201px;width:48px;height:14px;background:#585858;"></div><span class="t" style="left:1186px;top:1201px;font-size:11px;line-height:14px;color:#8a8a8a;">1.0</span><svg class="a" style="left:1220px;top:1202px" width="8" height="12"><path d="M4.4 1.6L6.9 5H1.9Z M1.9 7H6.9L4.4 10.4Z" fill="#8a8a8a"/></svg><span class="t" style="left:1096px;top:1216px;font-size:11px;line-height:14px;">Directionality:</span><div class="a" style="left:1182px;top:1217px;width:48px;height:14px;background:#585858;"></div><span class="t" style="left:1186px;top:1217px;font-size:11px;line-height:14px;color:#8a8a8a;">0.0</span><svg class="a" style="left:1220px;top:1218px" width="8" height="12"><path d="M4.4 1.6L6.9 5H1.9Z M1.9 7H6.9L4.4 10.4Z" fill="#8a8a8a"/></svg><span class="t" style="left:1096px;top:1239px;font-size:11px;line-height:14px;">Single bounce only:</span><div class="a" style="left:1236px;top:1242px;width:11px;height:10px;background:#575757;"></div><svg class="a" style="left:1236px;top:1242px" width="11" height="10"><path d="M2.2 5.2L4.3 7.6L8.8 2" fill="none" stroke="#8a8a8a" stroke-width="1.7"/></svg><div class="btn" style="left:1100px;top:1256px;width:133px;height:22px;line-height:24px;background:#5a5a5a;color:#8c8c8c;font-size:11px;border-radius:3px">Channel color mapping...</div><div class="a" style="left:1077px;top:1265px;width:189px;height:3px;background:#454545;"></div><div class="a" style="left:1081px;top:1264px;width:182px;height:1px;background:#525252;"></div><div class="a" style="left:1076px;top:1268px;width:391px;height:1px;background:#393939;"></div><div class="a" style="left:1076px;top:1269px;width:391px;height:14px;background:#444;"></div><div class="a" style="left:1458px;top:118px;width:6px;height:1147px;background:#3c3c3c;border-radius:3px"></div><div class="a" style="left:1466px;top:114px;width:1px;height:1155px;background:#3a3a3a;"></div><div class="a" style="left:1273px;top:119px;width:182px;height:249px;background:#525252;border-radius:3px"></div><svg class="a" style="left:1279px;top:127px" width="7" height="5"><path d="M0.2 0.5H6.2L3.2 4.3Z" fill="#b4b4b4"/></svg><span class="tb" style="left:1292px;top:121.5px;font-size:11.5px;line-height:14.5px;">Rendering</span><svg class="a" style="left:1442px;top:125px" width="8" height="8"><rect x="0.00" y="0.00" width="1.25" height="1.25" fill="#b8b8b8"/><rect x="0.00" y="2.05" width="1.25" height="1.25" fill="#b8b8b8"/><rect x="0.00" y="4.10" width="1.25" height="1.25" fill="#b8b8b8"/><rect x="2.05" y="0.00" width="1.25" height="1.25" fill="#b8b8b8"/><rect x="2.05" y="2.05" width="1.25" height="1.25" fill="#b8b8b8"/><rect x="2.05" y="4.10" width="1.25" height="1.25" fill="#b8b8b8"/><rect x="4.10" y="0.00" width="1.25" height="1.25" fill="#b8b8b8"/><rect x="4.10" y="2.05" width="1.25" height="1.25" fill="#b8b8b8"/><rect x="4.10" y="4.10" width="1.25" height="1.25" fill="#b8b8b8"/></svg><span class="t" style="right:117px;top:147px;font-size:11px;line-height:14px;">Interpolation:</span><div class="a" style="left:1359px;top:144px;width:81px;height:19px;background:#666666;"></div><span class="t" style="left:1364px;top:147px;font-size:11px;line-height:14px;color:#e4e4e4;">Linear</span><div class="arr" style="left:1426px;top:151px;border-left-width:4px;border-right-width:4px;border-top-width:5px;border-top-color:#d8d8d8"></div><span class="t" style="right:118px;top:171px;font-size:11px;line-height:14px;">Step size:</span><div class="a" style="left:1359px;top:172px;width:55px;height:14px;background:#626262;"></div><span class="t" style="left:1363px;top:172px;font-size:11px;line-height:14px;color:#e4e4e4;">1.0cm</span><svg class="a" style="left:1404px;top:173px" width="8" height="12"><path d="M4.4 1.6L6.9 5H1.9Z M1.9 7H6.9L4.4 10.4Z" fill="#d0d0d0"/></svg><div class="a" style="left:1289px;top:196px;width:10px;height:10px;background:#5c5c5c;"></div><span class="t" style="left:1301px;top:195px;font-size:11px;line-height:14px;">Flip frame</span><div class="gb" style="left:1285px;top:217px;width:158px;height:82px"></div><div class="a" style="left:1288px;top:215px;width:135px;height:4px;background:#525252;"></div><span class="t" style="left:1290px;top:210px;font-size:11px;line-height:14px;color:#ececec;">Motion blur &amp; Frame interp.</span><span class="t" style="right:124px;top:231px;font-size:11px;line-height:14px;">Mode:</span><div class="a" style="left:1352px;top:228px;width:82px;height:19px;background:#666666;"></div><span class="t" style="left:1357px;top:231px;font-size:11px;line-height:14px;color:#e4e4e4;">Disabled</span><div class="arr" style="left:1420px;top:235px;border-left-width:4px;border-right-width:4px;border-top-width:5px;border-top-color:#d8d8d8"></div><span class="t" style="right:124px;top:255px;font-size:11px;line-height:14px;">Velocity:</span><div class="a" style="left:1352px;top:253px;width:82px;height:19px;background:#585858;"></div><div class="arr" style="left:1420px;top:260px;border-left-width:4px;border-right-width:4px;border-top-width:5px;border-top-color:#8e8e8e"></div><span class="t" style="right:124px;top:276px;font-size:11px;line-height:14px;">Multiplier:</span><div class="a" style="left:1352px;top:277px;width:55px;height:14px;background:#585858;"></div><span class="t" style="left:1356px;top:277px;font-size:11px;line-height:14px;color:#8a8a8a;">1.0</span><svg class="a" style="left:1397px;top:278px" width="8" height="12"><path d="M4.4 1.6L6.9 5H1.9Z M1.9 7H6.9L4.4 10.4Z" fill="#8a8a8a"/></svg><div class="gb" style="left:1285px;top:307px;width:158px;height:58px"></div><div class="a" style="left:1288px;top:305px;width:80px;height:4px;background:#525252;"></div><span class="t" style="left:1290px;top:300px;font-size:11px;line-height:14px;color:#ececec;">Viewport display</span><span class="t" style="right:124px;top:321px;font-size:11px;line-height:14px;">Type:</span><div class="a" style="left:1352px;top:318px;width:81px;height:19px;background:#666666;"></div><span class="t" style="left:1357px;top:321px;font-size:11px;line-height:14px;color:#e4e4e4;">Point cloud</span><div class="arr" style="left:1419px;top:325px;border-left-width:4px;border-right-width:4px;border-top-width:5px;border-top-color:#d8d8d8"></div><span class="t" style="right:124px;top:341px;font-size:11px;line-height:14px;">Quality:</span><div class="a" style="left:1352px;top:342px;width:55px;height:14px;background:#626262;"></div><span class="t" style="left:1356px;top:342px;font-size:11px;line-height:14px;color:#e4e4e4;">0.25</span><svg class="a" style="left:1397px;top:343px" width="8" height="12"><path d="M4.4 1.6L6.9 5H1.9Z M1.9 7H6.9L4.4 10.4Z" fill="#d0d0d0"/></svg><div class="a" style="left:1273px;top:372px;width:182px;height:275px;background:#525252;border-radius:3px"></div><svg class="a" style="left:1279px;top:380px" width="7" height="5"><path d="M0.2 0.5H6.2L3.2 4.3Z" fill="#b4b4b4"/></svg><span class="tb" style="left:1292px;top:374.5px;font-size:11.5px;line-height:14.5px;">Statistics</span><svg class="a" style="left:1442px;top:378px" width="8" height="8"><rect x="0.00" y="0.00" width="1.25" height="1.25" fill="#b8b8b8"/><rect x="0.00" y="2.05" width="1.25" height="1.25" fill="#b8b8b8"/><rect x="0.00" y="4.10" width="1.25" height="1.25" fill="#b8b8b8"/><rect x="2.05" y="0.00" width="1.25" height="1.25" fill="#b8b8b8"/><rect x="2.05" y="2.05" width="1.25" height="1.25" fill="#b8b8b8"/><rect x="2.05" y="4.10" width="1.25" height="1.25" fill="#b8b8b8"/><rect x="4.10" y="0.00" width="1.25" height="1.25" fill="#b8b8b8"/><rect x="4.10" y="2.05" width="1.25" height="1.25" fill="#b8b8b8"/><rect x="4.10" y="4.10" width="1.25" height="1.25" fill="#b8b8b8"/></svg><div class="a" style="left:1284px;top:392px;width:159px;height:250px;background:#525252;border:2px solid #f4f4f4"></div><div class="a" style="left:1286px;top:394px;width:155px;height:12px;background:#474747;"></div></body></html>
